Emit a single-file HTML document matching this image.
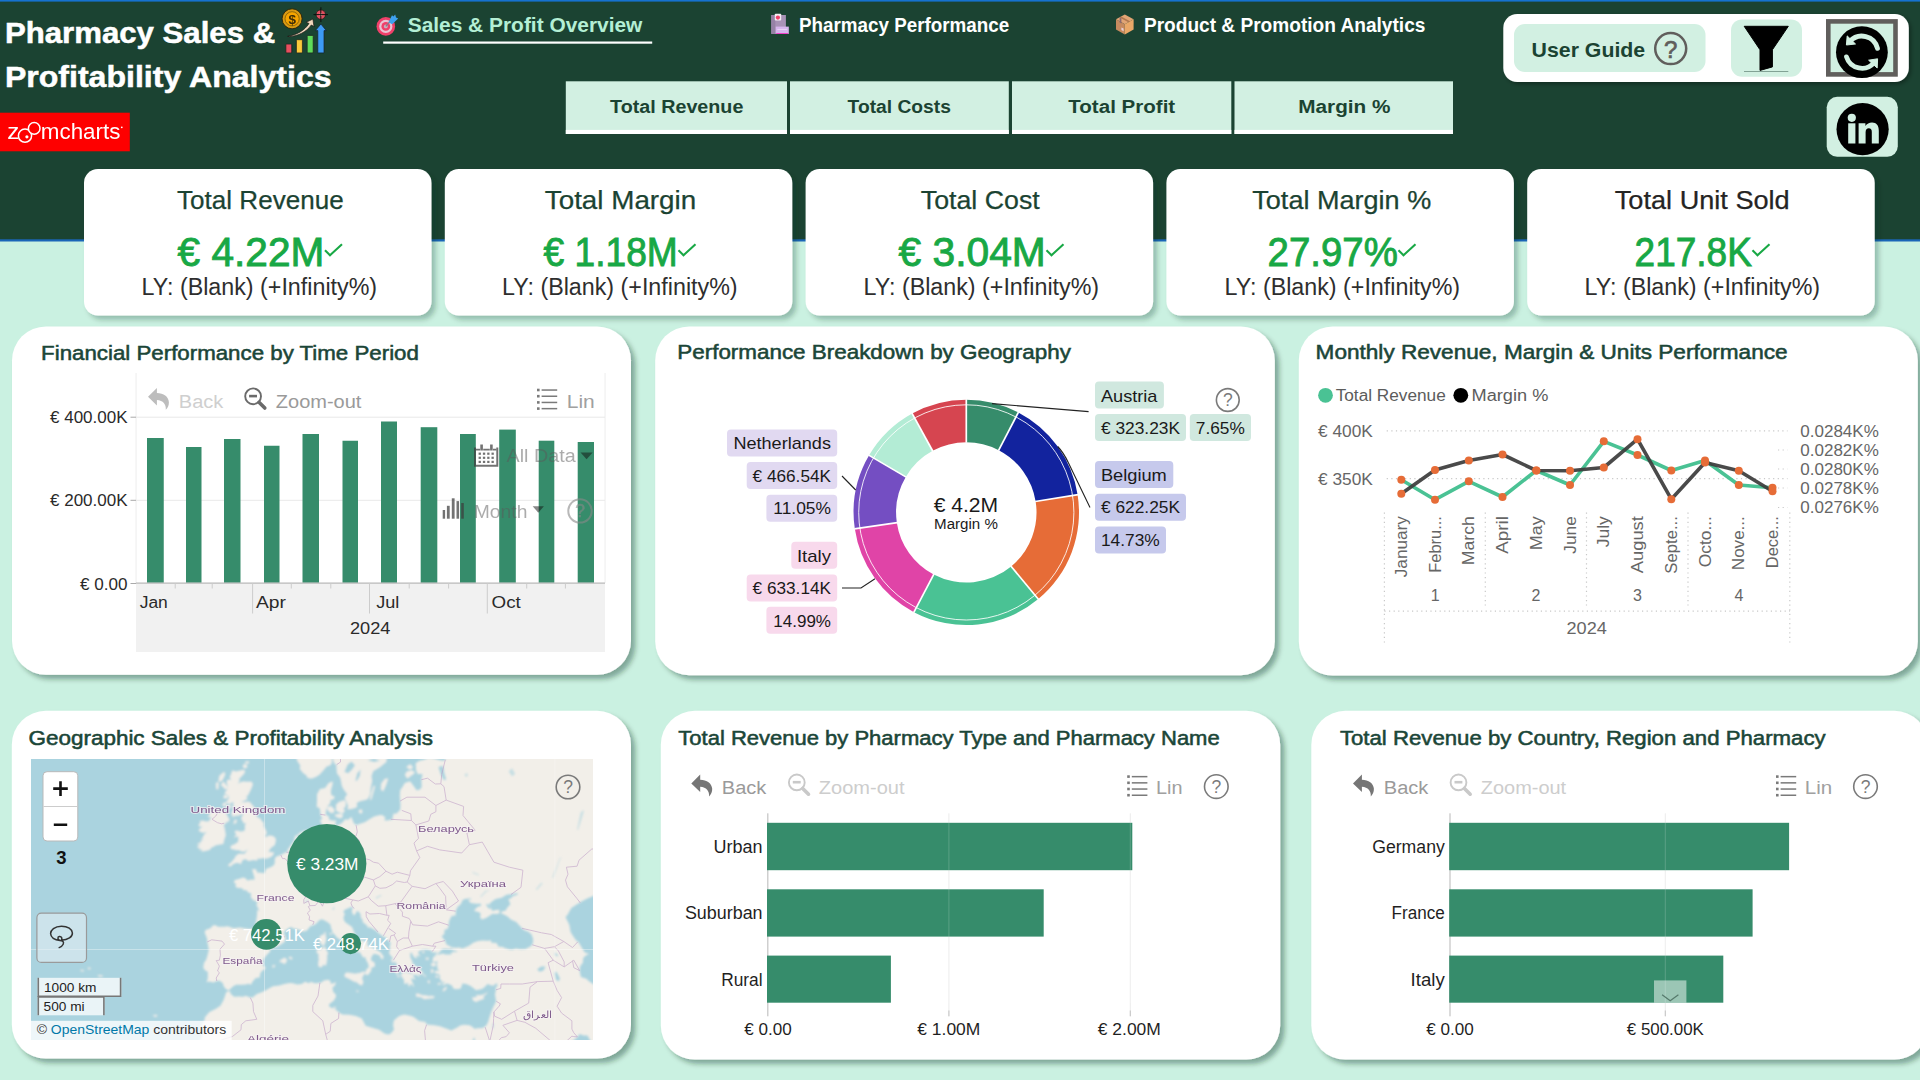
<!DOCTYPE html>
<html lang="en"><head><meta charset="utf-8"><title>Pharmacy Sales &amp; Profitability Analytics</title>
<style>html,body{margin:0;padding:0;background:#caf1e1;overflow:hidden}body{width:1920px;height:1080px;font-family:"Liberation Sans", sans-serif}svg{display:block;font-family:"Liberation Sans", sans-serif}text{white-space:pre}</style></head><body>
<svg width="1920" height="1080" viewBox="0 0 1920 1080">
<defs>
<filter id="sh" x="-5%" y="-5%" width="112%" height="115%"><feDropShadow dx="4.3" dy="4.4" stdDeviation="2.7" flood-color="#0c2a20" flood-opacity="0.37"/></filter>
<filter id="sh2" x="-5%" y="-10%" width="112%" height="130%"><feDropShadow dx="4" dy="4.2" stdDeviation="2.6" flood-color="#0c2a20" flood-opacity="0.27"/></filter>
<filter id="sh3" x="-5%" y="-10%" width="112%" height="130%"><feDropShadow dx="2" dy="2" stdDeviation="2" flood-color="#000" flood-opacity="0.35"/></filter>
<filter id="blurS" x="-10%" y="-10%" width="120%" height="120%"><feGaussianBlur stdDeviation="0.35"/></filter>
<filter id="blurB"><feGaussianBlur stdDeviation="0.4"/></filter>
<filter id="blur"><feGaussianBlur stdDeviation="0.8"/></filter>
<filter id="blurT" x="-5%" y="-30%" width="110%" height="160%"><feGaussianBlur stdDeviation="0.45"/></filter>
<clipPath id="mapclip"><rect x="31" y="759" width="562" height="281"/></clipPath>
</defs>
<rect width="1920" height="1080" fill="#caf1e1"/>
<rect width="1920" height="240.5" fill="#1b4332"/>
<rect y="239.3" width="1920" height="2.2" fill="#1a66b8"/>
<rect width="1920" height="1.6" fill="#1673cf"/>
<text x="4.9" y="42.5" font-size="29.5" textLength="270.3" lengthAdjust="spacingAndGlyphs" font-weight="bold" stroke="#fff" stroke-width="0.5" fill="#fff">Pharmacy Sales &amp;</text>
<text x="4.9" y="87.2" font-size="29.5" textLength="326.7" lengthAdjust="spacingAndGlyphs" font-weight="bold" stroke="#fff" stroke-width="0.5" fill="#fff">Profitability Analytics</text>
<g id="icon-title" filter="url(#blurS)"><circle cx="292.1" cy="18.8" r="10" fill="#d99a12" stroke="#2a2208" stroke-width="0.9"/><circle cx="292.1" cy="18.8" r="7.1" fill="#f6a400" stroke="#7a5a08" stroke-width="0.8"/><text x="292.2" y="23.6" font-size="13.5" font-weight="bold" text-anchor="middle" fill="#3a2c08">$</text><rect x="285.9" y="44.1" width="5.8" height="8.8" rx="0.8" fill="#e8505f" stroke="#20201c" stroke-width="0.7"/><rect x="296.4" y="39.7" width="6" height="13.2" rx="0.8" fill="#fbc93a" stroke="#20201c" stroke-width="0.7"/><rect x="307.2" y="35.4" width="6" height="17.5" rx="0.8" fill="#5fdc5a" stroke="#20201c" stroke-width="0.7"/><path d="M317.8 52.9 L317.8 30.6 L315.4 30.6 L320.9 24 L326.3 30.6 L324 30.6 L324 52.9 Z" fill="#3d9bf5" stroke="#15202c" stroke-width="0.7" stroke-linejoin="round"/><path d="M287.6 36.4 C297 34.8 304.5 30.5 309 23.5 L306.2 22.3 L312.9 19 L314 26.6 L311.3 25 C306.5 32 298 36 289.5 36.6 Z" fill="#f3d9bf" stroke="#1c1a16" stroke-width="0.7" stroke-linejoin="round"/><circle cx="320.8" cy="14.6" r="4.7" fill="#e0505f" stroke="#1c1a16" stroke-width="0.7"/><circle cx="320.8" cy="14.6" r="1.4" fill="#f3d9d0"/><path d="M320.8 7.2 V22 M313.6 14.6 H328" stroke="#101010" stroke-width="1"/></g>
<rect x="0" y="112.7" width="129.8" height="38.6" fill="#fe0000"/>
<g id="zoomcharts" fill="#fff" filter="url(#blurS)"><text x="7.2" y="138.6" font-size="22.5" textLength="12" lengthAdjust="spacingAndGlyphs">z</text><circle cx="25" cy="135.7" r="6.6" fill="none" stroke="#fff" stroke-width="1.5"/><circle cx="34.2" cy="128.4" r="5.8" fill="#fe0000" stroke="#fff" stroke-width="1.5"/><circle cx="26.9" cy="136.8" r="1.6"/><text x="40.8" y="138.6" font-size="22.5" textLength="79.6" lengthAdjust="spacingAndGlyphs">mcharts</text><circle cx="121.8" cy="127.3" r="0.9"/></g>
<g id="icon-nav" filter="url(#blurS)"><circle cx="385.8" cy="26.4" r="9.3" fill="#f0406a"/><circle cx="385.8" cy="26.4" r="6.6" fill="#e9c4d4"/><circle cx="385.8" cy="26.4" r="4.4" fill="#f0406a"/><circle cx="385.8" cy="26.4" r="1.9" fill="#c9b0c0"/><path d="M385.8 26.4 L392.5 18.5" stroke="#8a7a8a" stroke-width="1.3"/><path d="M388.6 22.2 L392 15.2 L393.4 16.6 L395.2 14.4 L396 17.4 L398.2 18.6 L392.2 24.2 Z" fill="#3ea2f0"/><rect x="771.3" y="15" width="14.6" height="18.9" fill="#a893b6"/><rect x="771.3" y="15" width="4" height="18.9" fill="#9682a6"/><rect x="775.7" y="26.6" width="13.1" height="7.3" fill="#d7b6ee"/><rect x="776.2" y="33" width="12" height="1" fill="#f040c8"/><rect x="774.8" y="13.8" width="6.4" height="6.8" rx="0.8" fill="#f4eef4"/><circle cx="777.9" cy="17.6" r="2.1" fill="#f0406a"/><rect x="777.3" y="29" width="9.6" height="1" fill="#e8d2f6"/><path d="M1124.8 14.4 L1133.6 19.2 L1124.8 24.2 L1116 19.2 Z" fill="#e2a574"/><path d="M1116 19.2 L1124.8 24.2 L1124.8 34.6 L1116 29.6 Z" fill="#c68a5e"/><path d="M1133.6 19.2 L1124.8 24.2 L1124.8 34.6 L1133.6 29.6 Z" fill="#eaa868"/><path d="M1121.2 16.4 L1130 21.2 L1128.4 22.2 L1119.6 17.4 Z" fill="#b07850"/><path d="M1119.6 17.4 L1121.4 18.4 L1121.4 23.6 L1119.6 22.6 Z" fill="#8a6a72"/><path d="M1121.4 30 L1123.6 31.2 L1123.6 28.6 L1121.4 27.4 Z" fill="#e8d0d8"/></g>
<text x="407.7" y="32.0" font-size="20" textLength="234.7" lengthAdjust="spacingAndGlyphs" font-weight="bold" fill="#b4efd5">Sales &amp; Profit Overview</text>
<rect x="383.2" y="41.5" width="269" height="2.2" fill="#fff"/>
<text x="799.0" y="31.7" font-size="20" textLength="210.2" lengthAdjust="spacingAndGlyphs" font-weight="bold" fill="#fff">Pharmacy Performance</text>
<text x="1143.9" y="31.7" font-size="20" textLength="281.5" lengthAdjust="spacingAndGlyphs" font-weight="bold" fill="#fff">Product &amp; Promotion Analytics</text>
<rect x="565.8" y="81.3" width="221.2" height="52.7" fill="#d2f0e2"/>
<rect x="565.8" y="129.9" width="221.2" height="4.1" fill="#fff"/>
<text x="610.1" y="113.2" font-size="19.2" textLength="133.3" lengthAdjust="spacingAndGlyphs" font-weight="bold" fill="#1b4332">Total Revenue</text>
<rect x="790" y="81.3" width="218.8" height="52.7" fill="#d2f0e2"/>
<rect x="790" y="129.9" width="218.8" height="4.1" fill="#fff"/>
<text x="847.6" y="113.2" font-size="19.2" textLength="103.3" lengthAdjust="spacingAndGlyphs" font-weight="bold" fill="#1b4332">Total Costs</text>
<rect x="1012" y="81.3" width="219.3" height="52.7" fill="#d2f0e2"/>
<rect x="1012" y="129.9" width="219.3" height="4.1" fill="#fff"/>
<text x="1068.3" y="113.2" font-size="19.2" textLength="106.9" lengthAdjust="spacingAndGlyphs" font-weight="bold" fill="#1b4332">Total Profit</text>
<rect x="1234.5" y="81.3" width="218.5" height="52.7" fill="#d2f0e2"/>
<rect x="1234.5" y="129.9" width="218.5" height="4.1" fill="#fff"/>
<text x="1298.3" y="113.2" font-size="19.2" textLength="92.1" lengthAdjust="spacingAndGlyphs" font-weight="bold" fill="#1b4332">Margin %</text>
<rect x="1503.3" y="14" width="405.5" height="68" rx="14" fill="#fff" filter="url(#sh3)"/>
<rect x="1514" y="24" width="191.5" height="48" rx="11" fill="#d2f0e2"/>
<text x="1531.6" y="56.5" font-size="21" textLength="113.6" lengthAdjust="spacingAndGlyphs" font-weight="bold" fill="#1b4332">User Guide</text>
<circle cx="1670.7" cy="48.6" r="15.5" fill="none" stroke="#605e5c" stroke-width="2.5"/>
<text x="1670.7" y="57.6" font-size="24" text-anchor="middle" stroke="#605e5c" stroke-width="0.7" fill="#605e5c">?</text>
<rect x="1731" y="19.4" width="71" height="57.4" rx="11" fill="#d2f0e2"/>
<path d="M1744.2 26.3 L1788.3 26.3 L1772.4 49.8 L1772.4 66.9 L1760 70.4 L1760 49.8 Z" fill="#000" stroke="#000" stroke-width="1" stroke-linejoin="round"/>
<rect x="1744" y="71" width="44.3" height="0.8" fill="#6f8f82"/>
<rect x="1828.3" y="21.4" width="67.2" height="53" fill="#d2f0e2" stroke="#605e5c" stroke-width="4.6"/>
<g id="icon-refresh"><circle cx="1861.9" cy="52.2" r="25.9" fill="#000"/><path d="M1849.9 41.4 A16.1 16.1 0 0 1 1877.5 48.3" fill="none" stroke="#d2f0e2" stroke-width="4.8" stroke-linecap="round"/><path d="M1874.2 62.5 A16.1 16.1 0 0 1 1846.5 56.9" fill="none" stroke="#d2f0e2" stroke-width="4.8" stroke-linecap="round"/><path d="M1846.4 45.0 L1847.2 35.9 L1855.5 44.0 Z" fill="#d2f0e2" stroke="#d2f0e2" stroke-width="1" stroke-linejoin="round"/><path d="M1877.6 58.8 L1877.2 68.0 L1868.6 60.2 Z" fill="#d2f0e2" stroke="#d2f0e2" stroke-width="1" stroke-linejoin="round"/></g>
<rect x="1826.7" y="96.8" width="71.1" height="60" rx="10.5" fill="#d2f0e2"/>
<g id="icon-linkedin"><circle cx="1862.6" cy="129.2" r="26.1" fill="#000"/><rect x="1848.2" y="123.3" width="7.2" height="20.2" fill="#d2f0e2"/><circle cx="1851.8" cy="117.8" r="4.1" fill="#d2f0e2"/><path d="M1858.6 123.3 H1865.4 V126 C1866.8 123.8 1869.2 122.6 1872 122.6 C1876.6 122.6 1878.8 125.6 1878.8 130.8 V143.5 H1871.8 V132 C1871.8 129.4 1870.8 128.2 1868.8 128.2 C1866.8 128.2 1865.6 129.6 1865.6 132.2 V143.5 H1858.6 Z" fill="#d2f0e2"/></g>
<rect x="84.0" y="169" width="347.5" height="146.5" rx="14" fill="#fff" filter="url(#sh2)"/>
<text x="177.1" y="209.4" font-size="26" textLength="166.6" lengthAdjust="spacingAndGlyphs" stroke="#1b4332" stroke-width="0.25" fill="#1b4332">Total Revenue</text>
<text x="177.6" y="265.9" font-size="40" textLength="146.7" lengthAdjust="spacingAndGlyphs" stroke="#18a845" stroke-width="0.9" fill="#18a845">€ 4.22M</text>
<path d="M325.0 250.3 L330.0 255.2 L342.0 244.2" fill="none" stroke="#18a845" stroke-width="2.1"/>
<text x="141.5" y="294.6" font-size="23.5" textLength="235.6" lengthAdjust="spacingAndGlyphs" fill="#2e2e2e">LY: (Blank) (+Infinity%)</text>
<rect x="444.8" y="169" width="347.5" height="146.5" rx="14" fill="#fff" filter="url(#sh2)"/>
<text x="544.8" y="209.4" font-size="26" textLength="151.4" lengthAdjust="spacingAndGlyphs" stroke="#1b4332" stroke-width="0.25" fill="#1b4332">Total Margin</text>
<text x="543.6" y="265.9" font-size="40" textLength="134.2" lengthAdjust="spacingAndGlyphs" stroke="#18a845" stroke-width="0.9" fill="#18a845">€ 1.18M</text>
<path d="M678.5 250.3 L683.5 255.2 L695.5 244.2" fill="none" stroke="#18a845" stroke-width="2.1"/>
<text x="502.0" y="294.6" font-size="23.5" textLength="235.6" lengthAdjust="spacingAndGlyphs" fill="#2e2e2e">LY: (Blank) (+Infinity%)</text>
<rect x="805.6" y="169" width="347.5" height="146.5" rx="14" fill="#fff" filter="url(#sh2)"/>
<text x="920.8" y="209.4" font-size="26" textLength="118.9" lengthAdjust="spacingAndGlyphs" stroke="#1b4332" stroke-width="0.25" fill="#1b4332">Total Cost</text>
<text x="898.6" y="265.9" font-size="40" textLength="147.2" lengthAdjust="spacingAndGlyphs" stroke="#18a845" stroke-width="0.9" fill="#18a845">€ 3.04M</text>
<path d="M1046.5 250.3 L1051.5 255.2 L1063.5 244.2" fill="none" stroke="#18a845" stroke-width="2.1"/>
<text x="863.5" y="294.6" font-size="23.5" textLength="235.6" lengthAdjust="spacingAndGlyphs" fill="#2e2e2e">LY: (Blank) (+Infinity%)</text>
<rect x="1166.4" y="169" width="347.5" height="146.5" rx="14" fill="#fff" filter="url(#sh2)"/>
<text x="1252.3" y="209.4" font-size="26" textLength="178.9" lengthAdjust="spacingAndGlyphs" stroke="#1b4332" stroke-width="0.25" fill="#1b4332">Total Margin %</text>
<text x="1267.6" y="265.9" font-size="40" textLength="130.2" lengthAdjust="spacingAndGlyphs" stroke="#18a845" stroke-width="0.9" fill="#18a845">27.97%</text>
<path d="M1398.5 250.3 L1403.5 255.2 L1415.5 244.2" fill="none" stroke="#18a845" stroke-width="2.1"/>
<text x="1224.5" y="294.6" font-size="23.5" textLength="235.6" lengthAdjust="spacingAndGlyphs" fill="#2e2e2e">LY: (Blank) (+Infinity%)</text>
<rect x="1527.2" y="169" width="347.5" height="146.5" rx="14" fill="#fff" filter="url(#sh2)"/>
<text x="1614.8" y="209.4" font-size="26" textLength="174.9" lengthAdjust="spacingAndGlyphs" stroke="#252423" stroke-width="0.25" fill="#252423">Total Unit Sold</text>
<text x="1634.6" y="265.9" font-size="40" textLength="117.2" lengthAdjust="spacingAndGlyphs" stroke="#18a845" stroke-width="0.9" fill="#18a845">217.8K</text>
<path d="M1752.5 250.3 L1757.5 255.2 L1769.5 244.2" fill="none" stroke="#18a845" stroke-width="2.1"/>
<text x="1584.5" y="294.6" font-size="23.5" textLength="235.6" lengthAdjust="spacingAndGlyphs" fill="#2e2e2e">LY: (Blank) (+Infinity%)</text>
<rect x="12" y="326.4" width="619" height="348.4" rx="34" fill="#fff" filter="url(#sh)"/>
<rect x="655.2" y="326.4" width="619.6" height="348.8" rx="34" fill="#fff" filter="url(#sh)"/>
<rect x="1298.8" y="326.4" width="619" height="349.2" rx="34" fill="#fff" filter="url(#sh)"/>
<rect x="11.8" y="710.8" width="619.2" height="347.8" rx="34" fill="#fff" filter="url(#sh)"/>
<rect x="660.8" y="710.8" width="619.4" height="348.8" rx="34" fill="#fff" filter="url(#sh)"/>
<rect x="1311.3" y="710.8" width="617" height="348.8" rx="34" fill="#fff" filter="url(#sh)"/>
<text x="41.1" y="359.5" font-size="21" textLength="377.8" lengthAdjust="spacingAndGlyphs" stroke="#1b4638" stroke-width="0.55" fill="#1b4638">Financial Performance by Time Period</text>
<text x="677.3" y="359.4" font-size="21" textLength="393.6" lengthAdjust="spacingAndGlyphs" stroke="#1b4638" stroke-width="0.55" fill="#1b4638">Performance Breakdown by Geography</text>
<text x="1315.6" y="359.4" font-size="21" textLength="472.0" lengthAdjust="spacingAndGlyphs" stroke="#1b4638" stroke-width="0.55" fill="#1b4638">Monthly Revenue, Margin &amp; Units Performance</text>
<text x="28.5" y="745.0" font-size="21" textLength="404.4" lengthAdjust="spacingAndGlyphs" stroke="#1b4638" stroke-width="0.55" fill="#1b4638">Geographic Sales &amp; Profitability Analysis</text>
<text x="678.3" y="744.7" font-size="21" textLength="541.4" lengthAdjust="spacingAndGlyphs" stroke="#1b4638" stroke-width="0.55" fill="#1b4638">Total Revenue by Pharmacy Type and Pharmacy Name</text>
<text x="1339.9" y="744.7" font-size="21" textLength="485.7" lengthAdjust="spacingAndGlyphs" stroke="#1b4638" stroke-width="0.55" fill="#1b4638">Total Revenue by Country, Region and Pharmacy</text>
<g id="p1">
<rect x="136" y="583" width="469" height="69" fill="#f1f1f1"/>
<rect x="135.6" y="373" width="0.9" height="210" fill="#ececec"/><rect x="604.6" y="373" width="0.9" height="210" fill="#ececec"/>
<rect x="136" y="416.7" width="469" height="1" fill="#e9e9e9"/>
<rect x="136" y="499.8" width="469" height="1" fill="#e9e9e9"/>
<rect x="130.5" y="416.7" width="5.5" height="1" fill="#aaa"/>
<rect x="130.5" y="499.8" width="5.5" height="1" fill="#aaa"/>
<rect x="130.5" y="583" width="5.5" height="1" fill="#aaa"/>
<rect x="147" y="438" width="16.75" height="145.00" fill="#368c6b"/>
<rect x="186" y="447" width="15.50" height="136.00" fill="#368c6b"/>
<rect x="224" y="439" width="16.50" height="144.00" fill="#368c6b"/>
<rect x="264" y="445.75" width="15.50" height="137.25" fill="#368c6b"/>
<rect x="302.5" y="434" width="16.50" height="149.00" fill="#368c6b"/>
<rect x="342.5" y="440.75" width="15.50" height="142.25" fill="#368c6b"/>
<rect x="381" y="421.5" width="16.00" height="161.50" fill="#368c6b"/>
<rect x="420.7" y="427.2" width="16.60" height="155.80" fill="#368c6b"/>
<rect x="460" y="434" width="15.80" height="149.00" fill="#368c6b"/>
<rect x="499.2" y="429.6" width="16.60" height="153.40" fill="#368c6b"/>
<rect x="538.7" y="440.7" width="15.60" height="142.30" fill="#368c6b"/>
<rect x="577.7" y="442" width="16.30" height="141.00" fill="#368c6b"/>
<rect x="136" y="582.4" width="469" height="1.5" fill="#c4c4c4"/>
<rect x="174.7" y="583.5" width="1" height="5" fill="#ccc"/>
<rect x="211.7" y="583.5" width="1" height="5" fill="#ccc"/>
<rect x="290.8" y="583.5" width="1" height="5" fill="#ccc"/>
<rect x="330.3" y="583.5" width="1" height="5" fill="#ccc"/>
<rect x="408.7" y="583.5" width="1" height="5" fill="#ccc"/>
<rect x="448.1" y="583.5" width="1" height="5" fill="#ccc"/>
<rect x="526.2" y="583.5" width="1" height="5" fill="#ccc"/>
<rect x="564.9" y="583.5" width="1" height="5" fill="#ccc"/>
<rect x="252.1" y="583.5" width="1" height="30" fill="#ccc"/>
<rect x="369.0" y="583.5" width="1" height="30" fill="#ccc"/>
<rect x="486.8" y="583.5" width="1" height="30" fill="#ccc"/>
<text x="50.0" y="422.7" font-size="16" textLength="77.5" lengthAdjust="spacingAndGlyphs" fill="#2a2a2a">€ 400.00K</text>
<text x="50.0" y="505.8" font-size="16" textLength="77.5" lengthAdjust="spacingAndGlyphs" fill="#2a2a2a">€ 200.00K</text>
<text x="80.0" y="589.7" font-size="16" textLength="47.5" lengthAdjust="spacingAndGlyphs" fill="#2a2a2a">€ 0.00</text>
<text x="139.7" y="607.8" font-size="16" textLength="28.1" lengthAdjust="spacingAndGlyphs" fill="#2a2a2a">Jan</text>
<text x="255.9" y="607.8" font-size="16" textLength="29.9" lengthAdjust="spacingAndGlyphs" fill="#2a2a2a">Apr</text>
<text x="376.2" y="607.8" font-size="16" textLength="23.1" lengthAdjust="spacingAndGlyphs" fill="#2a2a2a">Jul</text>
<text x="491.6" y="607.8" font-size="16" textLength="29.2" lengthAdjust="spacingAndGlyphs" fill="#2a2a2a">Oct</text>
<text x="350.0" y="633.9" font-size="16" textLength="40.4" lengthAdjust="spacingAndGlyphs" fill="#2a2a2a">2024</text>
<g transform="translate(148,388.2)" fill="#bdbdbd"><path d="M0 8.6 L8.9 -0.2 L8.9 4.9 C15.5 5 20.6 8.6 20.9 14 C21 17 19.8 19.6 17.8 21.6 C18.2 16.4 15.2 12.2 8.9 11.9 L8.9 17.2 Z"/></g>
<text x="178.8" y="407.5" font-size="18" textLength="44.5" lengthAdjust="spacingAndGlyphs" fill="#cfcfcf">Back</text>
<g transform="translate(243.8,387.5)" fill="none" stroke="#6a6a6a"><circle cx="9.3" cy="8.8" r="7.9" stroke-width="1.9"/><path d="M5.3 8.6 L13.2 8.6" stroke-width="2.6"/><path d="M15.2 14.8 L21 20.6" stroke-width="3.6" stroke-linecap="round" stroke="#6a6a6a"/></g>
<text x="275.8" y="407.5" font-size="18" textLength="85.6" lengthAdjust="spacingAndGlyphs" fill="#9a9a9a">Zoom-out</text>
<g transform="translate(537,388.4)" fill="#7a7a7a"><rect x="0" y="0.3" width="2.6" height="2.6"/><rect x="4.6" y="0.9" width="15.6" height="1.5"/><rect x="0" y="6.5" width="2.6" height="2.6"/><rect x="4.6" y="7.1" width="15.6" height="1.5"/><rect x="0" y="12.7" width="2.6" height="2.6"/><rect x="4.6" y="13.3" width="15.6" height="1.5"/><rect x="0" y="18.9" width="2.6" height="2.6"/><rect x="4.6" y="19.5" width="15.6" height="1.5"/></g>
<text x="566.8" y="408.0" font-size="18" textLength="28.0" lengthAdjust="spacingAndGlyphs" fill="#a0a0a0">Lin</text>
<g opacity="0.72">
<g fill="none" stroke="#3c3c3c"><path d="M475 447.6 V465.8 H497.3 V447.6" stroke-width="2"/><path d="M481.6 444.6 V450.4 M491.4 444.6 V450.4" stroke-width="2.6"/><path d="M476 449.6 H480 M483.2 449.6 H489.8 M493 449.6 H496.5" stroke-width="1.6"/></g>
<g fill="#3c3c3c"><rect x="478.6" y="452.6" width="2.3" height="2.2"/><rect x="482.9" y="452.6" width="2.3" height="2.2"/><rect x="487.2" y="452.6" width="2.3" height="2.2"/><rect x="491.5" y="452.6" width="2.3" height="2.2"/><rect x="478.6" y="456.7" width="2.3" height="2.2"/><rect x="482.9" y="456.7" width="2.3" height="2.2"/><rect x="487.2" y="456.7" width="2.3" height="2.2"/><rect x="491.5" y="456.7" width="2.3" height="2.2"/><rect x="478.6" y="460.8" width="2.3" height="2.2"/><rect x="482.9" y="460.8" width="2.3" height="2.2"/><rect x="487.2" y="460.8" width="2.3" height="2.2"/><rect x="491.5" y="460.8" width="2.3" height="2.2"/></g>
<g fill="#3c3c3c"><rect x="442.7" y="510" width="2.4" height="8.7"/><rect x="446.9" y="505.8" width="2.8" height="12.9"/><rect x="451.8" y="498.3" width="2.8" height="20.4"/><rect x="456.5" y="501.1" width="2.6" height="17.6"/><rect x="461.2" y="503" width="2.6" height="15.7"/></g>
</g>
<g opacity="0.5">
<text x="506.6" y="462.2" font-size="18" textLength="69.0" lengthAdjust="spacingAndGlyphs" fill="#5a5a5a">All Data</text>
<path d="M580.5 452.4 L592.7 452.4 L586.6 459.2 Z" fill="#111"/>
<text x="473.8" y="518.0" font-size="18" textLength="53.6" lengthAdjust="spacingAndGlyphs" fill="#5a5a5a">Month</text>
<path d="M532.7 506.2 L543.9 506.2 L538.3 512.8 Z" fill="#111"/>
</g>
<g opacity="0.6">
<circle cx="580" cy="510.9" r="11.7" fill="none" stroke="#8a8a8a" stroke-width="2"/>
<text x="580.0" y="517.2" font-size="17.5" text-anchor="middle" stroke="#8a8a8a" stroke-width="0.5" fill="#8a8a8a">?</text>
</g>
</g>
<g id="p2">
<path d="M966.30 399.70 A112.7 112.7 0 0 1 1018.34 412.43 L998.71 450.13 A70.2 70.2 0 0 0 966.30 442.20 Z" fill="#368c6b"/>
<path d="M1018.34 412.43 A112.7 112.7 0 0 1 1077.61 494.77 L1035.64 501.42 A70.2 70.2 0 0 0 998.71 450.13 Z" fill="#12239e"/>
<path d="M1077.61 494.77 A112.7 112.7 0 0 1 1038.29 599.11 L1011.14 566.41 A70.2 70.2 0 0 0 1035.64 501.42 Z" fill="#e66c37"/>
<path d="M1038.29 599.11 A112.7 112.7 0 0 1 913.91 612.18 L933.67 574.55 A70.2 70.2 0 0 0 1011.14 566.41 Z" fill="#4ac294"/>
<path d="M913.91 612.18 A112.7 112.7 0 0 1 854.81 528.86 L896.85 522.66 A70.2 70.2 0 0 0 933.67 574.55 Z" fill="#e044a7"/>
<path d="M854.81 528.86 A112.7 112.7 0 0 1 869.09 455.37 L905.75 476.88 A70.2 70.2 0 0 0 896.85 522.66 Z" fill="#744ec2"/>
<path d="M869.09 455.37 A112.7 112.7 0 0 1 912.18 413.55 L932.59 450.82 A70.2 70.2 0 0 0 905.75 476.88 Z" fill="#b3ecd5"/>
<path d="M912.18 413.55 A112.7 112.7 0 0 1 966.30 399.70 L966.30 442.20 A70.2 70.2 0 0 0 932.59 450.82 Z" fill="#d64550"/>
<circle cx="966.3" cy="512.4" r="107.6" fill="none" stroke="#fff" stroke-width="1" opacity="0.85"/>
<path d="M966.30 442.70 L966.30 399.20" stroke="#fff" stroke-width="1.7"/>
<path d="M998.48 450.58 L1018.57 411.99" stroke="#fff" stroke-width="1.7"/>
<path d="M1035.14 501.50 L1078.11 494.69" stroke="#fff" stroke-width="1.7"/>
<path d="M1010.82 566.03 L1038.61 599.50" stroke="#fff" stroke-width="1.7"/>
<path d="M933.90 574.11 L913.68 612.63" stroke="#fff" stroke-width="1.7"/>
<path d="M897.35 522.58 L854.31 528.94" stroke="#fff" stroke-width="1.7"/>
<path d="M906.18 477.13 L868.66 455.12" stroke="#fff" stroke-width="1.7"/>
<path d="M932.83 451.26 L911.94 413.11" stroke="#fff" stroke-width="1.7"/>
<text x="933.7" y="512.4" font-size="20" textLength="64.5" lengthAdjust="spacingAndGlyphs" fill="#1a1a1a">€ 4.2M</text>
<text x="934.1" y="529.3" font-size="14" textLength="63.8" lengthAdjust="spacingAndGlyphs" fill="#1a1a1a">Margin %</text>
<g fill="none" stroke="#222" stroke-width="1.1"><path d="M992 403.6 L1088.6 411.6"/><path d="M1057.7 446.5 Q1063.5 452.5 1068.5 463 L1090 507.5"/><path d="M842 476 L855.7 490"/><path d="M842 588 L861 588 L875 578.7"/></g>
<rect x="727" y="429.6" width="110.2" height="27" rx="4" fill="#e1d9f1"/>
<text x="733.4" y="449.0" font-size="17" textLength="97.6" lengthAdjust="spacingAndGlyphs" fill="#1a1a1a">Netherlands</text>
<rect x="746.7" y="462" width="90.5" height="27" rx="4" fill="#e1d9f1"/>
<text x="752.6" y="482.0" font-size="17" textLength="78.4" lengthAdjust="spacingAndGlyphs" fill="#1a1a1a">€ 466.54K</text>
<rect x="766.4" y="494.7" width="70.8" height="27" rx="4" fill="#e1d9f1"/>
<text x="773.3" y="514.2" font-size="17" textLength="57.7" lengthAdjust="spacingAndGlyphs" fill="#1a1a1a">11.05%</text>
<rect x="791.3" y="541.7" width="45.9" height="27" rx="4" fill="#f8d9ec"/>
<text x="796.9" y="562.0" font-size="17" textLength="34.1" lengthAdjust="spacingAndGlyphs" fill="#1a1a1a">Italy</text>
<rect x="746.7" y="574.4" width="90.5" height="27" rx="4" fill="#f8d9ec"/>
<text x="752.6" y="593.7" font-size="17" textLength="78.4" lengthAdjust="spacingAndGlyphs" fill="#1a1a1a">€ 633.14K</text>
<rect x="766.4" y="606.8" width="70.8" height="27" rx="4" fill="#f8d9ec"/>
<text x="773.3" y="626.7" font-size="17" textLength="57.7" lengthAdjust="spacingAndGlyphs" fill="#1a1a1a">14.99%</text>
<rect x="1095" y="381.6" width="68.9" height="27" rx="4" fill="#d0e8df"/>
<text x="1100.9" y="401.5" font-size="17" textLength="56.6" lengthAdjust="spacingAndGlyphs" fill="#1a1a1a">Austria</text>
<rect x="1095" y="414.1" width="91.0" height="27" rx="4" fill="#d0e8df"/>
<text x="1100.9" y="434.0" font-size="17" textLength="79.2" lengthAdjust="spacingAndGlyphs" fill="#1a1a1a">€ 323.23K</text>
<rect x="1189.8" y="414.1" width="61.2" height="27" rx="4" fill="#d0e8df"/>
<text x="1195.8" y="434.0" font-size="17" textLength="49.0" lengthAdjust="spacingAndGlyphs" fill="#1a1a1a">7.65%</text>
<rect x="1095" y="460.9" width="78.3" height="27" rx="4" fill="#c6c9ec"/>
<text x="1100.9" y="481.0" font-size="17" textLength="65.9" lengthAdjust="spacingAndGlyphs" fill="#1a1a1a">Belgium</text>
<rect x="1095" y="493.7" width="91.0" height="27" rx="4" fill="#c6c9ec"/>
<text x="1100.9" y="513.0" font-size="17" textLength="79.2" lengthAdjust="spacingAndGlyphs" fill="#1a1a1a">€ 622.25K</text>
<rect x="1095" y="526.4" width="71.0" height="27" rx="4" fill="#c6c9ec"/>
<text x="1100.9" y="546.0" font-size="17" textLength="58.9" lengthAdjust="spacingAndGlyphs" fill="#1a1a1a">14.73%</text>
<circle cx="1227.8" cy="400" r="11.4" fill="none" stroke="#7a7a7a" stroke-width="1.6"/>
<text x="1227.8" y="406.2" font-size="17.5" text-anchor="middle" fill="#7a7a7a">?</text>
</g>
<g id="p3">
<circle cx="1325.5" cy="395.3" r="7.4" fill="#4ac294"/>
<text x="1335.7" y="401.2" font-size="16" textLength="110.1" lengthAdjust="spacingAndGlyphs" fill="#5c5c5c">Total Revenue</text>
<circle cx="1460.8" cy="395.3" r="7.4" fill="#000"/>
<text x="1471.5" y="401.2" font-size="16" textLength="76.8" lengthAdjust="spacingAndGlyphs" fill="#5c5c5c">Margin %</text>
<text x="1318.0" y="436.7" font-size="16" textLength="54.8" lengthAdjust="spacingAndGlyphs" fill="#666">€ 400K</text>
<text x="1318.0" y="484.7" font-size="16" textLength="54.8" lengthAdjust="spacingAndGlyphs" fill="#666">€ 350K</text>
<path d="M1386.7 430.8 H1787.5 M1386.7 478.7 H1787.5" stroke="#c8c8c8" stroke-width="1.2" stroke-dasharray="1.2 3.4" fill="none"/>
<path d="M1778 450 H1787.5 M1778 469 H1787.5 M1778 488 H1787.5 M1778 507.5 H1787.5" stroke="#c8c8c8" stroke-width="1.2" stroke-dasharray="1.2 3.4" fill="none"/>
<text x="1800.3" y="436.7" font-size="16" textLength="78.5" lengthAdjust="spacingAndGlyphs" fill="#666">0.0284K%</text>
<text x="1800.3" y="455.6" font-size="16" textLength="78.5" lengthAdjust="spacingAndGlyphs" fill="#666">0.0282K%</text>
<text x="1800.3" y="474.7" font-size="16" textLength="78.5" lengthAdjust="spacingAndGlyphs" fill="#666">0.0280K%</text>
<text x="1800.3" y="493.7" font-size="16" textLength="78.5" lengthAdjust="spacingAndGlyphs" fill="#666">0.0278K%</text>
<text x="1800.3" y="512.6" font-size="16" textLength="78.5" lengthAdjust="spacingAndGlyphs" fill="#666">0.0276K%</text>
<path d="M1401.3 479.7 L1435.0 499.7 L1468.8 481.3 L1502.5 497.0 L1536.3 470.5 L1570.0 485.0 L1603.8 441.3 L1637.5 455.0 L1671.3 470.5 L1705.0 460.5 L1738.8 485.0 L1772.5 487.8" fill="none" stroke="#4ac294" stroke-width="3.6" stroke-linejoin="round"/>
<path d="M1401.3 493.7 L1435.0 470.0 L1468.8 460.5 L1502.5 454.5 L1536.3 470.5 L1570.0 470.8 L1603.8 467.5 L1637.5 439.2 L1671.3 499.2 L1705.0 462.5 L1738.8 470.8 L1772.5 491.3" fill="none" stroke="#3c3c3c" stroke-opacity="0.93" stroke-width="3.6" stroke-linejoin="round"/>
<circle cx="1401.3" cy="479.7" r="4" fill="#e66c37"/>
<circle cx="1435.0" cy="499.7" r="4" fill="#e66c37"/>
<circle cx="1468.8" cy="481.3" r="4" fill="#e66c37"/>
<circle cx="1502.5" cy="497.0" r="4" fill="#e66c37"/>
<circle cx="1536.3" cy="470.5" r="4" fill="#e66c37"/>
<circle cx="1570.0" cy="485.0" r="4" fill="#e66c37"/>
<circle cx="1603.8" cy="441.3" r="4" fill="#e66c37"/>
<circle cx="1637.5" cy="455.0" r="4" fill="#e66c37"/>
<circle cx="1671.3" cy="470.5" r="4" fill="#e66c37"/>
<circle cx="1705.0" cy="460.5" r="4" fill="#e66c37"/>
<circle cx="1738.8" cy="485.0" r="4" fill="#e66c37"/>
<circle cx="1772.5" cy="487.8" r="4" fill="#e66c37"/>
<circle cx="1401.3" cy="493.7" r="4" fill="#e66c37"/>
<circle cx="1435.0" cy="470.0" r="4" fill="#e66c37"/>
<circle cx="1468.8" cy="460.5" r="4" fill="#e66c37"/>
<circle cx="1502.5" cy="454.5" r="4" fill="#e66c37"/>
<circle cx="1536.3" cy="470.5" r="4" fill="#e66c37"/>
<circle cx="1570.0" cy="470.8" r="4" fill="#e66c37"/>
<circle cx="1603.8" cy="467.5" r="4" fill="#e66c37"/>
<circle cx="1637.5" cy="439.2" r="4" fill="#e66c37"/>
<circle cx="1671.3" cy="499.2" r="4" fill="#e66c37"/>
<circle cx="1705.0" cy="462.5" r="4" fill="#e66c37"/>
<circle cx="1738.8" cy="470.8" r="4" fill="#e66c37"/>
<circle cx="1772.5" cy="491.3" r="4" fill="#e66c37"/>
<path d="M1384.4 512.6 V644.4 M1789.8 512.6 V644.4 M1485.3 512.6 V605.4 M1586.5 512.6 V605.4 M1688 512.6 V605.4 M1384.4 611.1 H1790" stroke="#c8c8c8" stroke-width="1.2" stroke-dasharray="1.2 3.4" fill="none"/>
<text transform="translate(1406.9,516.2) rotate(-90)" font-size="16" text-anchor="end" textLength="61" lengthAdjust="spacingAndGlyphs" fill="#666">January</text>
<text transform="translate(1440.6,516.2) rotate(-90)" font-size="16" text-anchor="end" textLength="56.5" lengthAdjust="spacingAndGlyphs" fill="#666">Febru...</text>
<text transform="translate(1474.4,516.2) rotate(-90)" font-size="16" text-anchor="end" textLength="49" lengthAdjust="spacingAndGlyphs" fill="#666">March</text>
<text transform="translate(1508.1,516.2) rotate(-90)" font-size="16" text-anchor="end" textLength="37.5" lengthAdjust="spacingAndGlyphs" fill="#666">April</text>
<text transform="translate(1541.9,516.2) rotate(-90)" font-size="16" text-anchor="end" textLength="34" lengthAdjust="spacingAndGlyphs" fill="#666">May</text>
<text transform="translate(1575.6,516.2) rotate(-90)" font-size="16" text-anchor="end" textLength="37.5" lengthAdjust="spacingAndGlyphs" fill="#666">June</text>
<text transform="translate(1609.4,516.2) rotate(-90)" font-size="16" text-anchor="end" textLength="31" lengthAdjust="spacingAndGlyphs" fill="#666">July</text>
<text transform="translate(1643.1,516.2) rotate(-90)" font-size="16" text-anchor="end" textLength="57" lengthAdjust="spacingAndGlyphs" fill="#666">August</text>
<text transform="translate(1676.9,516.2) rotate(-90)" font-size="16" text-anchor="end" textLength="57.5" lengthAdjust="spacingAndGlyphs" fill="#666">Septe...</text>
<text transform="translate(1710.6,516.2) rotate(-90)" font-size="16" text-anchor="end" textLength="51" lengthAdjust="spacingAndGlyphs" fill="#666">Octo...</text>
<text transform="translate(1744.3,516.2) rotate(-90)" font-size="16" text-anchor="end" textLength="54" lengthAdjust="spacingAndGlyphs" fill="#666">Nove...</text>
<text transform="translate(1778.1,516.2) rotate(-90)" font-size="16" text-anchor="end" textLength="52" lengthAdjust="spacingAndGlyphs" fill="#666">Dece...</text>
<text x="1435.3" y="600.8" font-size="16" text-anchor="middle" fill="#666">1</text>
<text x="1536.0" y="600.8" font-size="16" text-anchor="middle" fill="#666">2</text>
<text x="1637.4" y="600.8" font-size="16" text-anchor="middle" fill="#666">3</text>
<text x="1739.0" y="600.8" font-size="16" text-anchor="middle" fill="#666">4</text>
<text x="1566.5" y="633.6" font-size="16" textLength="40.3" lengthAdjust="spacingAndGlyphs" fill="#666">2024</text>
</g>
<g id="p4">
<g clip-path="url(#mapclip)">
<rect x="31" y="759" width="562.5" height="281.5" fill="#f2efe9"/>
<g filter="url(#blur)">
<path d="M26.1 1044.0 L199.4 1044.0 L199.4 1041.0 L202.0 1035.8 L202.3 1033.2 L201.0 1029.1 L201.5 1025.3 L204.6 1020.0 L204.9 1017.3 L209.4 1012.0 L215.5 1009.1 L220.4 1005.8 L223.6 999.9 L225.2 995.2 L226.3 992.0 L228.4 991.2 L228.4 990.3 L225.5 988.8 L223.6 986.0 L222.9 983.2 L219.7 980.8 L216.8 981.0 L213.6 982.4 L209.1 981.6 L206.5 982.3 L207.8 978.4 L207.8 971.8 L205.2 970.6 L203.3 968.1 L203.9 963.1 L206.2 959.8 L207.3 956.0 L208.8 950.1 L208.4 947.5 L207.3 941.9 L207.1 938.9 L205.9 935.4 L204.6 932.6 L205.5 930.1 L210.4 928.3 L212.6 925.7 L214.9 925.0 L218.1 926.8 L223.9 926.7 L227.8 926.3 L233.6 928.2 L240.0 927.6 L245.2 928.5 L249.7 929.1 L253.2 928.5 L254.8 927.0 L256.1 921.2 L256.8 917.1 L257.4 909.4 L259.7 911.2 L257.7 907.5 L256.4 904.8 L257.4 902.0 L252.9 900.1 L250.6 896.8 L251.3 893.5 L248.1 892.6 L246.5 890.2 L243.9 890.2 L241.9 888.3 L236.8 887.8 L234.9 885.4 L236.8 884.4 L234.9 883.2 L233.7 882.2 L234.9 880.1 L239.0 878.9 L242.6 877.6 L245.2 877.9 L247.4 880.5 L251.6 879.4 L254.5 879.8 L254.3 877.1 L252.9 872.2 L252.1 869.0 L256.1 869.2 L257.1 872.4 L261.3 872.7 L263.9 873.2 L265.5 871.7 L265.1 870.7 L266.1 869.0 L271.5 866.8 L274.2 864.7 L274.8 862.2 L274.8 858.6 L276.4 856.4 L280.9 855.1 L285.1 852.5 L287.7 852.0 L287.4 849.9 L290.3 845.9 L293.8 841.0 L295.1 835.7 L297.4 835.1 L299.3 833.0 L304.5 830.6 L309.0 830.6 L309.9 831.9 L311.5 827.6 L316.1 827.4 L317.7 830.3 L319.3 829.2 L319.9 825.6 L322.5 825.6 L321.5 823.2 L319.9 820.8 L322.2 818.8 L320.6 814.9 L320.2 811.5 L319.6 808.1 L316.7 806.9 L317.0 800.7 L317.0 794.3 L319.9 789.0 L325.1 788.1 L328.6 783.0 L332.8 781.3 L332.5 784.8 L330.9 790.4 L331.2 794.9 L334.7 796.6 L333.8 799.3 L330.6 800.1 L330.2 803.6 L328.0 805.8 L326.7 808.1 L326.0 811.5 L325.7 814.9 L328.9 816.3 L328.9 819.3 L330.2 820.1 L333.8 820.8 L336.0 819.9 L335.4 824.3 L334.4 824.9 L338.3 825.2 L342.5 822.4 L345.1 819.3 L348.3 819.7 L351.2 816.8 L352.8 820.5 L353.8 823.2 L356.3 825.1 L359.9 823.8 L364.7 822.3 L370.2 818.8 L374.1 816.6 L379.9 815.1 L382.8 815.2 L385.7 817.7 L384.0 819.9 L386.6 820.5 L389.5 820.1 L392.7 819.3 L392.7 817.1 L393.4 813.8 L396.6 813.5 L400.2 809.8 L400.5 805.0 L400.2 800.7 L399.8 796.0 L400.2 790.2 L403.4 785.4 L404.7 783.0 L410.1 781.2 L413.7 786.0 L416.6 790.2 L419.8 789.6 L421.7 787.2 L421.4 779.7 L422.4 773.9 L417.6 773.9 L415.9 769.6 L415.9 766.5 L415.6 763.3 L419.5 760.8 L424.0 759.8 L428.8 757.6 L432.1 758.0 L435.9 758.9 L439.8 760.2 L443.7 760.8 L445.3 759.8 L446.2 756.3 L450.7 754.4 L456.5 753.8 L459.1 754.4 L459.1 750.5 L26.1 750.5 Z" fill="#aad3df"/>
<path d="M230.0 989.2 L232.9 986.4 L236.1 984.7 L241.9 984.7 L245.8 984.4 L248.7 983.8 L251.0 984.7 L252.6 981.6 L255.8 978.0 L259.7 977.4 L260.0 974.3 L261.4 971.5 L264.2 969.4 L266.0 968.1 L263.5 966.1 L262.4 962.3 L264.2 958.0 L267.4 954.3 L270.1 951.6 L270.3 949.2 L272.6 948.4 L278.5 946.1 L284.5 941.9 L285.8 938.0 L284.2 934.5 L284.2 931.4 L287.1 929.2 L290.9 927.0 L294.1 928.8 L297.0 929.0 L299.0 929.7 L302.8 931.4 L306.1 931.0 L307.7 929.7 L309.6 927.0 L311.5 925.7 L314.8 924.7 L317.3 922.5 L319.3 920.3 L322.0 919.2 L325.1 920.8 L328.0 922.5 L330.6 924.8 L330.9 927.5 L332.5 931.9 L332.2 932.5 L335.4 935.2 L336.4 937.1 L340.2 939.8 L343.3 942.8 L345.8 945.4 L348.6 947.3 L352.1 947.3 L355.0 950.7 L356.7 950.8 L357.0 952.6 L359.7 952.0 L361.2 954.6 L363.1 957.5 L365.4 957.3 L366.3 960.6 L367.9 963.1 L368.9 967.3 L366.6 969.0 L365.2 972.7 L365.5 974.7 L368.0 974.9 L371.2 971.0 L371.5 967.7 L375.0 966.5 L374.7 962.7 L370.8 960.1 L371.5 956.9 L373.4 953.9 L375.7 953.9 L379.9 955.6 L380.5 957.9 L382.9 959.4 L383.7 956.4 L380.5 952.2 L376.6 950.1 L373.2 948.1 L367.6 945.4 L367.1 943.8 L368.8 941.5 L365.0 941.2 L361.2 940.6 L359.2 938.9 L356.1 936.5 L354.1 931.9 L352.1 927.0 L349.6 925.2 L345.5 922.4 L343.6 919.4 L343.8 915.8 L345.1 914.4 L343.4 912.1 L344.4 910.0 L348.9 908.0 L351.8 906.8 L353.2 908.0 L351.8 909.4 L352.1 912.6 L353.8 915.5 L355.4 914.1 L356.7 911.2 L358.3 911.2 L360.5 914.0 L360.8 917.6 L362.8 920.3 L362.5 922.1 L367.0 925.4 L367.6 927.5 L370.5 927.5 L374.1 929.4 L377.0 931.4 L378.2 932.8 L381.1 935.0 L384.0 937.0 L385.0 937.0 L387.6 939.8 L389.5 941.9 L390.8 942.8 L389.8 946.5 L390.2 949.7 L388.9 952.2 L390.0 954.8 L393.1 958.5 L393.4 960.2 L395.1 961.9 L398.2 966.3 L400.5 971.0 L402.7 971.6 L405.0 971.4 L408.9 971.4 L412.1 973.5 L412.4 974.7 L408.9 972.7 L404.7 972.0 L402.1 972.7 L400.7 975.1 L401.8 976.9 L404.0 980.0 L404.3 983.9 L406.0 984.0 L407.2 982.3 L408.7 986.0 L409.4 987.2 L410.0 984.4 L411.4 984.0 L413.4 986.8 L414.0 986.8 L413.0 983.6 L411.4 980.0 L411.4 977.8 L413.7 979.2 L415.9 979.0 L414.0 977.4 L413.0 974.9 L416.6 974.8 L419.4 977.1 L419.5 973.1 L416.9 971.0 L414.7 969.2 L410.8 967.7 L410.1 967.0 L412.4 966.1 L414.0 965.1 L415.0 964.6 L412.4 963.6 L412.4 961.5 L410.5 957.7 L410.1 953.5 L412.1 952.4 L412.4 954.8 L415.0 958.0 L417.4 958.3 L415.6 955.6 L417.6 956.0 L419.0 958.1 L418.2 954.8 L421.4 956.6 L419.2 954.2 L417.6 952.0 L419.2 951.4 L421.7 949.8 L426.3 949.5 L431.2 950.5 L432.4 952.6 L437.2 952.2 L433.3 957.3 L433.0 958.1 L432.5 962.1 L436.6 961.5 L438.2 961.5 L436.6 963.6 L437.5 966.5 L437.2 968.5 L439.3 970.8 L436.2 970.8 L434.0 971.8 L435.9 973.5 L438.5 973.9 L440.1 975.4 L439.8 979.6 L442.4 980.8 L440.4 982.3 L445.6 982.2 L440.9 985.0 L444.9 984.8 L446.9 983.6 L450.4 984.8 L452.0 985.5 L453.3 988.4 L455.9 989.2 L460.4 988.7 L461.7 986.0 L462.3 983.4 L466.2 984.0 L470.7 986.1 L476.1 990.2 L481.0 989.2 L483.3 988.2 L487.7 984.0 L491.3 985.6 L493.9 985.6 L496.5 983.1 L497.6 985.6 L495.5 988.0 L496.0 989.8 L495.0 994.2 L495.7 999.1 L496.3 1001.3 L495.4 1002.7 L493.3 1006.9 L491.3 1011.7 L490.1 1015.3 L489.1 1018.5 L488.3 1021.5 L486.8 1024.6 L485.2 1026.6 L482.3 1028.1 L477.8 1028.3 L474.3 1028.7 L472.7 1027.1 L469.6 1025.2 L464.0 1024.7 L460.1 1025.5 L457.2 1027.6 L451.4 1030.4 L446.9 1028.7 L440.0 1026.3 L434.6 1025.3 L426.6 1024.6 L425.6 1021.9 L419.0 1020.9 L413.4 1016.7 L410.3 1015.7 L404.3 1014.4 L399.2 1016.0 L393.8 1020.6 L393.1 1025.3 L394.0 1029.8 L390.8 1033.4 L388.2 1034.6 L384.4 1033.4 L379.2 1029.8 L371.5 1027.6 L365.7 1025.7 L363.4 1021.5 L361.8 1018.5 L356.0 1016.0 L349.4 1014.7 L342.3 1014.4 L338.9 1012.6 L336.0 1009.7 L334.7 1008.9 L329.6 1006.9 L328.9 1004.6 L333.9 1000.5 L336.0 996.8 L335.8 994.4 L333.1 991.8 L332.5 987.6 L335.1 985.6 L335.9 981.8 L333.8 983.2 L330.9 983.8 L330.2 980.8 L328.1 979.7 L323.8 980.6 L320.9 982.7 L314.6 983.2 L310.9 981.8 L309.0 983.2 L305.1 981.8 L301.7 983.9 L297.2 984.4 L292.9 983.2 L289.6 983.1 L284.2 984.0 L279.3 985.4 L272.9 986.2 L265.0 990.8 L260.4 992.7 L256.8 994.0 L252.5 997.6 L250.3 997.6 L245.6 995.7 L243.2 996.8 L239.2 996.4 L234.2 996.8 L230.5 993.8 L230.3 991.2 L228.4 991.6 L228.4 990.7 Z" fill="#aad3df"/>
<path d="M433.3 957.3 L436.6 954.2 L440.4 951.6 L441.7 949.5 L444.9 948.8 L451.3 949.2 L451.7 947.3 L452.4 947.3 L451.7 949.7 L457.2 951.2 L457.2 952.0 L453.3 952.0 L450.1 953.3 L452.4 954.1 L450.7 954.6 L445.3 954.6 L443.0 953.5 L440.4 954.3 L436.9 954.6 L434.6 956.7 Z" fill="#aad3df"/>
<path d="M452.0 947.3 L455.3 947.7 L459.8 947.5 L462.3 948.4 L466.9 946.7 L469.4 945.4 L473.2 942.8 L477.2 941.3 L482.1 940.6 L488.8 940.8 L491.0 940.2 L491.3 942.8 L496.5 943.0 L498.6 946.7 L502.3 946.7 L504.7 948.1 L508.6 949.2 L511.9 949.8 L515.8 948.6 L520.5 949.2 L525.6 948.9 L531.4 945.8 L532.8 943.7 L533.2 939.3 L531.6 934.5 L528.7 931.9 L523.9 930.1 L520.5 926.7 L516.3 922.1 L510.7 919.4 L507.9 916.7 L504.9 914.9 L500.7 913.0 L502.3 911.2 L505.4 910.8 L507.8 907.1 L510.4 904.3 L508.4 899.2 L511.3 898.0 L512.6 896.3 L517.8 894.5 L517.4 893.0 L512.6 894.0 L506.5 894.7 L501.7 897.8 L495.9 898.9 L492.6 901.0 L490.1 903.4 L488.8 903.2 L490.7 907.1 L492.3 910.9 L495.9 910.1 L499.4 909.8 L499.4 913.5 L495.5 914.0 L492.5 913.7 L489.9 915.5 L486.2 918.0 L481.9 919.5 L480.1 917.6 L480.7 913.5 L479.1 912.3 L473.9 910.8 L477.2 907.1 L481.0 905.7 L481.0 903.7 L476.5 903.8 L470.7 902.9 L467.8 899.6 L472.0 899.6 L470.1 898.2 L464.9 899.0 L462.7 900.1 L460.7 904.3 L457.5 907.1 L455.6 911.2 L455.9 915.3 L451.4 916.2 L449.1 921.2 L448.7 924.8 L448.0 928.6 L444.5 930.1 L444.3 934.1 L441.6 936.3 L443.7 938.9 L444.9 940.6 L446.6 944.5 L451.4 946.9 Z" fill="#aad3df"/>
<path d="M599.6 893.5 L593.2 895.9 L586.7 898.7 L581.6 901.5 L577.1 904.3 L571.3 908.0 L567.4 914.9 L565.5 917.1 L569.3 924.8 L570.6 931.9 L573.2 936.3 L575.8 940.0 L579.0 942.8 L581.2 946.7 L584.8 952.6 L589.3 953.9 L586.1 955.2 L583.2 958.1 L582.9 962.7 L580.3 966.1 L579.6 970.6 L580.9 977.1 L586.4 978.8 L589.0 981.2 L593.8 984.4 L599.6 985.6 Z" fill="#aad3df"/>
<path d="M573.5 1044.0 L571.9 1041.0 L574.5 1039.5 L577.4 1036.9 L579.6 1034.0 L583.5 1035.5 L587.4 1035.5 L590.6 1041.0 L591.9 1044.0 Z" fill="#aad3df"/>
<path d="M472.8 1044.0 L473.0 1039.5 L474.3 1036.9 L474.7 1038.8 L475.4 1044.0 Z" fill="#aad3df"/>
<path d="M488.8 1044.0 L489.4 1040.3 L489.9 1039.9 L490.2 1044.0 Z" fill="#aad3df"/>
<path d="M227.8 865.5 L231.0 866.6 L232.0 864.7 L235.5 862.9 L237.8 862.7 L241.0 864.0 L242.3 860.2 L245.5 858.9 L248.7 861.0 L251.9 860.2 L254.5 860.0 L257.4 858.6 L259.3 858.8 L263.6 857.9 L266.1 858.7 L270.8 857.0 L273.4 854.8 L273.8 852.2 L270.9 852.3 L268.0 851.2 L269.3 850.6 L270.6 848.3 L272.7 846.6 L274.8 844.9 L275.8 840.7 L275.6 838.3 L272.9 835.9 L268.4 835.5 L266.8 837.3 L264.8 836.0 L266.8 833.5 L265.8 829.8 L263.2 827.6 L265.3 828.7 L263.5 825.4 L264.0 823.0 L261.9 821.2 L260.3 818.8 L257.1 817.1 L255.7 814.3 L254.5 809.8 L253.9 806.4 L251.6 804.5 L250.8 802.8 L248.1 801.6 L244.5 802.2 L240.7 801.6 L243.9 800.9 L247.7 798.7 L246.1 797.0 L248.1 795.1 L250.0 791.3 L251.3 788.4 L252.9 784.2 L251.6 781.8 L246.5 781.8 L242.6 781.6 L238.4 783.2 L237.4 784.2 L239.0 781.8 L240.1 779.7 L238.4 779.4 L241.0 776.9 L244.5 773.3 L245.0 770.3 L242.8 769.9 L236.1 771.4 L232.3 770.4 L231.0 774.5 L229.7 777.2 L231.3 779.4 L227.1 780.0 L226.8 783.6 L228.1 786.6 L226.8 790.2 L224.4 793.3 L228.1 795.4 L229.1 797.2 L227.8 800.7 L228.7 804.7 L227.1 809.8 L228.7 808.7 L230.0 803.6 L232.0 802.4 L233.9 802.4 L232.9 805.3 L234.7 808.0 L232.9 810.7 L231.3 813.2 L232.9 817.1 L236.1 815.5 L238.4 815.7 L241.6 814.1 L244.2 813.5 L242.6 814.9 L241.1 818.8 L242.6 821.0 L243.9 823.4 L246.1 823.0 L244.8 826.0 L245.2 828.1 L244.5 830.8 L241.9 831.6 L239.6 831.5 L236.8 830.6 L234.3 831.8 L235.8 833.5 L236.5 834.6 L233.7 837.4 L238.1 836.2 L238.4 839.4 L238.1 842.1 L234.3 844.5 L231.6 845.4 L230.3 847.0 L231.3 849.1 L234.2 849.4 L236.8 850.3 L239.0 849.9 L240.7 851.2 L244.1 851.8 L246.1 850.6 L247.7 849.4 L246.8 851.1 L245.2 852.7 L244.8 854.0 L241.9 853.8 L237.8 853.9 L237.1 855.6 L235.3 855.9 L235.2 857.8 L232.6 860.7 L231.8 862.0 L229.2 864.0 Z" fill="#f2efe9"/>
<path d="M217.0 808.9 L219.8 810.7 L218.1 812.6 L221.5 811.3 L224.9 810.6 L227.1 814.9 L227.8 817.1 L229.4 819.3 L228.7 821.6 L226.6 822.1 L225.2 824.1 L223.6 824.5 L224.4 827.4 L225.2 831.4 L225.8 835.5 L224.9 837.4 L223.6 842.3 L223.4 843.9 L219.8 844.5 L215.8 845.2 L213.9 846.5 L211.2 847.8 L209.5 849.9 L207.1 850.4 L203.9 851.2 L201.2 851.5 L202.6 849.4 L198.8 849.9 L200.7 848.0 L197.8 848.0 L197.5 846.5 L200.7 844.5 L197.0 844.7 L198.8 842.8 L201.0 842.9 L200.4 841.4 L203.9 839.6 L200.5 839.8 L202.3 838.6 L203.7 835.5 L204.8 833.5 L206.5 833.0 L206.2 832.2 L202.6 832.7 L198.6 830.8 L199.4 829.2 L200.7 828.1 L202.6 826.5 L199.4 826.5 L198.4 824.6 L200.7 823.2 L199.4 821.6 L201.2 820.7 L204.2 820.7 L205.2 821.6 L209.1 821.2 L210.0 819.1 L212.0 817.3 L207.8 817.0 L209.7 814.3 L210.4 813.2 L211.1 811.5 L213.1 810.7 L215.3 810.1 Z" fill="#f2efe9"/>
<path d="M298.0 750.5 L296.7 759.5 L298.0 762.1 L300.3 765.2 L299.9 768.9 L303.2 772.9 L307.0 775.7 L306.7 777.2 L309.9 778.4 L312.5 778.2 L316.1 776.7 L319.3 774.7 L321.2 772.7 L324.1 769.6 L325.4 767.7 L327.3 766.1 L329.3 765.8 L331.8 763.3 L331.8 759.5 L332.8 755.1 L333.1 760.2 L334.7 763.9 L336.7 764.6 L336.4 766.7 L337.0 773.3 L340.2 777.6 L341.2 781.8 L341.8 785.4 L343.4 789.0 L347.3 794.3 L345.7 796.6 L344.7 798.4 L346.3 801.3 L348.3 806.4 L347.1 808.9 L349.2 809.3 L353.4 808.5 L357.0 807.0 L356.7 803.0 L359.6 801.3 L365.0 800.1 L367.9 798.9 L370.0 794.2 L370.8 786.9 L372.1 781.2 L371.5 775.7 L373.4 770.8 L374.7 770.2 L380.2 767.1 L383.1 764.6 L386.3 762.1 L386.9 757.0 L385.7 750.5 Z" fill="#f2efe9"/>
<path d="M345.1 974.1 L346.5 972.8 L348.9 973.1 L350.7 973.2 L354.9 974.0 L360.5 973.1 L362.6 972.1 L365.4 972.1 L363.0 975.5 L361.7 978.4 L362.6 980.6 L363.1 981.9 L362.1 985.0 L360.2 984.7 L356.3 981.8 L354.3 981.6 L352.0 980.2 L348.8 978.4 L345.6 977.1 L344.6 975.9 Z" fill="#f2efe9" stroke="#f2efe9" stroke-width="0.5"/>
<path d="M317.3 949.5 L320.6 949.9 L323.7 947.1 L325.1 947.7 L326.0 949.9 L327.8 953.2 L326.7 956.0 L327.0 958.3 L326.0 964.4 L325.9 965.2 L323.1 964.4 L321.5 967.0 L320.2 967.1 L318.6 966.1 L318.5 963.6 L319.0 959.6 L319.3 958.5 L318.5 957.5 L319.1 955.2 L318.0 953.1 L317.1 952.9 L316.9 951.5 Z" fill="#f2efe9" stroke="#f2efe9" stroke-width="0.5"/>
<path d="M325.1 931.9 L325.4 934.5 L326.0 939.8 L324.4 944.1 L323.5 946.0 L321.2 943.4 L319.9 941.5 L319.9 939.5 L319.7 937.6 L320.9 935.7 L322.0 935.1 L324.4 934.7 L324.6 932.8 Z" fill="#f2efe9" stroke="#f2efe9" stroke-width="0.5"/>
<path d="M416.1 996.0 L416.6 993.6 L419.2 994.2 L422.2 995.4 L426.4 995.7 L430.3 996.8 L430.4 995.7 L432.7 996.6 L434.1 996.0 L433.7 998.0 L430.3 998.3 L424.0 998.9 L421.7 997.2 L419.2 996.8 L417.1 996.5 Z" fill="#f2efe9" stroke="#f2efe9" stroke-width="0.5"/>
<path d="M473.3 1000.3 L472.5 997.7 L476.8 997.2 L476.7 995.2 L479.1 995.6 L483.0 995.0 L487.3 992.8 L483.3 996.4 L483.3 997.6 L484.1 998.6 L481.2 999.5 L477.4 1001.1 L476.5 1001.7 L474.6 1001.1 Z" fill="#f2efe9" stroke="#f2efe9" stroke-width="0.5"/>
<path d="M279.6 961.1 L283.5 958.4 L285.1 958.1 L286.9 960.1 L285.4 963.1 L284.3 963.8 L282.2 962.3 L280.6 962.1 Z" fill="#f2efe9" stroke="#f2efe9" stroke-width="0.5"/>
<path d="M289.0 957.3 L290.9 957.0 L292.3 958.5 L291.6 959.2 L289.1 958.3 Z" fill="#f2efe9" stroke="#f2efe9" stroke-width="0.5"/>
<path d="M272.4 966.2 L273.5 965.2 L274.9 965.6 L274.2 967.0 L272.9 967.3 Z" fill="#f2efe9" stroke="#f2efe9" stroke-width="0.5"/>
<path d="M412.4 967.3 L415.0 965.9 L419.8 969.0 L422.9 973.1 L422.7 974.7 L419.8 972.7 L417.2 971.2 L415.6 969.8 Z" fill="#f2efe9" stroke="#f2efe9" stroke-width="0.5"/>
<path d="M443.0 991.2 L443.3 989.2 L446.2 986.8 L446.6 987.6 L445.3 990.0 Z" fill="#f2efe9" stroke="#f2efe9" stroke-width="0.5"/>
<path d="M431.1 964.0 L433.3 962.9 L435.0 963.1 L435.9 965.6 L432.7 966.3 L431.4 965.2 Z" fill="#f2efe9" stroke="#f2efe9" stroke-width="0.5"/>
<path d="M431.1 969.8 L433.0 969.5 L433.0 972.2 L431.4 972.7 Z" fill="#f2efe9" stroke="#f2efe9" stroke-width="0.5"/>
<path d="M435.6 976.1 L438.8 976.1 L438.5 977.1 L435.9 977.1 Z" fill="#f2efe9" stroke="#f2efe9" stroke-width="0.5"/>
<path d="M437.9 983.4 L440.8 983.2 L440.4 984.0 L438.2 984.7 Z" fill="#f2efe9" stroke="#f2efe9" stroke-width="0.5"/>
<path d="M427.9 980.8 L429.5 980.8 L429.5 983.1 L428.2 982.8 Z" fill="#f2efe9" stroke="#f2efe9" stroke-width="0.5"/>
<path d="M423.7 974.5 L425.3 975.5 L425.6 976.7 L424.0 975.5 Z" fill="#f2efe9" stroke="#f2efe9" stroke-width="0.5"/>
<path d="M425.9 957.9 L428.5 957.9 L428.2 959.4 L426.3 959.4 Z" fill="#f2efe9" stroke="#f2efe9" stroke-width="0.5"/>
<path d="M422.4 951.1 L424.2 951.4 L424.0 952.8 L422.7 952.6 Z" fill="#f2efe9" stroke="#f2efe9" stroke-width="0.5"/>
<path d="M395.6 972.7 L396.9 970.4 L398.5 973.1 L397.3 973.9 Z" fill="#f2efe9" stroke="#f2efe9" stroke-width="0.5"/>
<path d="M391.1 959.8 L393.1 959.2 L394.0 962.3 L392.7 962.6 Z" fill="#f2efe9" stroke="#f2efe9" stroke-width="0.5"/>
<path d="M397.4 975.1 L399.7 976.3 L398.9 977.1 L397.6 976.3 Z" fill="#f2efe9" stroke="#f2efe9" stroke-width="0.5"/>
<path d="M396.9 967.3 L398.2 967.5 L397.9 969.5 L396.9 969.4 Z" fill="#f2efe9" stroke="#f2efe9" stroke-width="0.5"/>
<path d="M356.7 990.6 L358.3 991.2 L357.9 992.0 L356.8 991.4 Z" fill="#f2efe9" stroke="#f2efe9" stroke-width="0.5"/>
<path d="M329.6 933.6 L331.7 933.2 L331.5 934.3 L329.9 934.3 Z" fill="#f2efe9" stroke="#f2efe9" stroke-width="0.5"/>
<path d="M336.0 805.3 L338.6 802.4 L343.8 800.4 L345.7 801.5 L345.4 806.4 L343.1 808.7 L344.7 810.4 L342.5 813.4 L340.2 812.6 L337.0 811.0 L336.0 809.3 L336.7 807.0 Z" fill="#f2efe9" stroke="#f2efe9" stroke-width="0.5"/>
<path d="M327.0 807.6 L330.9 806.2 L334.1 809.3 L333.8 812.6 L330.2 812.6 L328.3 810.4 Z" fill="#f2efe9" stroke="#f2efe9" stroke-width="0.5"/>
<path d="M335.1 814.9 L340.5 813.8 L342.8 814.9 L341.5 817.9 L338.3 817.5 L335.4 816.0 Z" fill="#f2efe9" stroke="#f2efe9" stroke-width="0.5"/>
<path d="M359.2 810.1 L361.8 809.8 L362.1 812.6 L360.5 813.4 L359.1 812.1 Z" fill="#f2efe9" stroke="#f2efe9" stroke-width="0.5"/>
<path d="M370.2 799.5 L371.2 793.7 L373.7 785.8 L374.7 786.6 L373.1 792.5 L371.2 799.3 Z" fill="#f2efe9" stroke="#f2efe9" stroke-width="0.5"/>
<path d="M381.1 789.6 L381.5 783.6 L385.0 779.0 L387.9 778.8 L385.7 785.4 L383.1 791.1 Z" fill="#f2efe9" stroke="#f2efe9" stroke-width="0.5"/>
<path d="M405.3 774.5 L406.9 771.8 L412.1 770.6 L414.7 772.7 L411.1 775.5 L407.6 778.2 L406.3 776.9 Z" fill="#f2efe9" stroke="#f2efe9" stroke-width="0.5"/>
<path d="M406.6 767.1 L410.1 764.6 L413.0 767.3 L410.1 769.6 Z" fill="#f2efe9" stroke="#f2efe9" stroke-width="0.5"/>
<path d="M254.5 859.5 L256.1 858.4 L257.6 859.3 L256.1 860.5 Z" fill="#f2efe9" stroke="#f2efe9" stroke-width="0.5"/>
<path d="M233.7 823.8 L234.9 819.9 L236.5 819.9 L236.1 822.7 Z" fill="#f2efe9" stroke="#f2efe9" stroke-width="0.5"/>
<path d="M218.7 781.2 L219.7 775.7 L224.2 772.0 L224.9 774.5 L223.3 778.2 L221.3 781.2 Z" fill="#f2efe9" stroke="#f2efe9" stroke-width="0.5"/>
<path d="M216.5 789.0 L216.2 783.0 L218.4 782.4 L218.1 789.0 Z" fill="#f2efe9" stroke="#f2efe9" stroke-width="0.5"/>
<path d="M221.0 784.8 L223.6 781.8 L225.2 784.2 L228.1 787.2 L225.8 789.6 L222.9 786.6 Z" fill="#f2efe9" stroke="#f2efe9" stroke-width="0.5"/>
<path d="M223.6 798.1 L224.5 794.9 L227.8 796.0 L227.4 798.1 Z" fill="#f2efe9" stroke="#f2efe9" stroke-width="0.5"/>
<path d="M222.6 805.3 L223.9 802.8 L225.8 804.1 L225.2 806.4 Z" fill="#f2efe9" stroke="#f2efe9" stroke-width="0.5"/>
<path d="M225.2 803.6 L227.8 800.1 L227.4 803.2 Z" fill="#f2efe9" stroke="#f2efe9" stroke-width="0.5"/>
<path d="M229.8 807.0 L231.0 805.3 L231.8 807.0 L231.0 808.5 Z" fill="#f2efe9" stroke="#f2efe9" stroke-width="0.5"/>
<path d="M242.9 766.5 L244.5 763.9 L246.8 765.2 L247.1 767.1 L244.5 768.3 Z" fill="#f2efe9" stroke="#f2efe9" stroke-width="0.5"/>
<path d="M245.2 762.1 L248.4 761.4 L248.7 763.3 L245.8 763.3 Z" fill="#f2efe9" stroke="#f2efe9" stroke-width="0.5"/>
<path d="M254.2 755.1 L256.1 749.2 L258.1 749.2 L256.8 755.1 Z" fill="#f2efe9" stroke="#f2efe9" stroke-width="0.5"/>
<path d="M153.3 1015.4 L156.6 1015.0 L156.9 1016.2 L154.3 1016.6 Z" fill="#f2efe9" stroke="#f2efe9" stroke-width="0.5"/>
<path d="M97.9 975.5 L102.1 975.5 L102.4 976.6 L98.9 976.6 Z" fill="#f2efe9" stroke="#f2efe9" stroke-width="0.5"/>
<path d="M88.2 967.9 L90.2 967.9 L90.2 969.0 L88.2 969.0 Z" fill="#f2efe9" stroke="#f2efe9" stroke-width="0.5"/>
<path d="M80.8 970.0 L83.7 970.6 L83.4 971.2 L80.8 970.8 Z" fill="#f2efe9" stroke="#f2efe9" stroke-width="0.5"/>
<path d="M333.8 1007.1 L335.7 1007.6 L335.1 1008.6 L333.8 1008.3 Z" fill="#f2efe9" stroke="#f2efe9" stroke-width="0.5"/>
<path d="M508.7 771.4 L512.0 768.3 L515.2 773.9 L512.0 776.3 Z" fill="#aad3df" opacity="0.6"/>
<path d="M464.6 774.5 L467.2 773.0 L467.8 776.0 L465.6 776.7 Z" fill="#aad3df" opacity="0.6"/>
<path d="M577.1 829.8 L580.6 813.2 L583.2 810.1 L583.8 811.0 L581.6 818.8 L578.0 830.1 Z" fill="#aad3df" opacity="0.6"/>
<path d="M552.2 877.6 L556.8 866.2 L560.3 857.1 L560.8 857.5 L557.4 866.7 L553.1 877.9 Z" fill="#aad3df" opacity="0.6"/>
<path d="M535.8 889.2 L541.6 882.5 L542.6 883.5 L536.8 890.0 Z" fill="#aad3df" opacity="0.6"/>
<path d="M480.1 896.8 L485.5 890.8 L490.7 890.2 L486.2 891.8 L481.0 897.3 Z" fill="#aad3df" opacity="0.6"/>
<path d="M472.0 871.7 L478.5 874.2 L478.8 875.4 L472.7 873.0 Z" fill="#aad3df" opacity="0.6"/>
<path d="M344.4 772.0 L347.6 764.6 L351.5 761.4 L355.0 765.2 L352.1 769.6 L348.3 773.3 Z" fill="#aad3df"/>
<path d="M355.4 780.6 L357.3 773.3 L360.5 769.6 L359.9 775.7 L357.0 780.8 Z" fill="#aad3df"/>
<path d="M367.6 760.2 L374.1 758.3 L379.9 760.8 L374.1 762.1 Z" fill="#aad3df"/>
<path d="M438.5 767.1 L443.0 765.8 L444.3 773.3 L446.2 779.4 L443.7 780.0 L440.8 774.5 Z" fill="#aad3df"/>
<path d="M537.1 969.4 L541.0 966.5 L545.5 966.5 L543.5 970.6 L539.7 971.8 Z" fill="#aad3df"/>
<path d="M554.5 972.7 L556.4 971.8 L560.0 978.4 L558.4 981.6 L555.8 979.2 Z" fill="#aad3df"/>
<path d="M554.2 952.6 L556.8 953.9 L558.4 956.0 L555.8 956.0 Z" fill="#aad3df"/>
<path d="M297.4 837.8 L299.0 834.6 L300.6 836.7 L301.6 839.4 L298.7 842.1 L297.0 841.0 Z" fill="#aad3df"/>
<path d="M375.7 897.8 L381.1 894.9 L381.5 895.6 L376.0 898.4 Z" fill="#aad3df"/>
<path d="M304.1 902.9 L306.7 900.1 L309.0 900.6 L306.4 901.5 Z" fill="#aad3df"/>
<path d="M322.5 888.3 L326.4 890.2 L327.0 890.7 L323.1 889.2 Z" fill="#aad3df"/>
<path d="M332.5 909.4 L334.4 906.2 L333.8 909.8 Z" fill="#aad3df"/>
<path d="M486.8 903.8 L490.1 905.7 L491.0 908.9 L488.8 908.5 L486.2 905.2 Z" fill="#aad3df"/>
<path d="M492.6 1023.4 L493.6 1023.4 L493.3 1028.7 L492.6 1028.3 Z" fill="#aad3df"/>
</g>
<path d="M207.3 941.9 L211.7 939.8 L222.0 941.1 L224.5 944.1 L220.0 949.2 L220.4 955.2 L219.4 960.2 L216.2 960.6 L219.4 966.1 L217.5 971.0 L219.4 972.7 L216.2 978.0 L216.8 981.0 M253.2 928.5 L255.5 931.4 L260.0 933.2 L269.0 933.6 L273.8 935.4 L275.8 936.7 L284.8 936.9 M280.9 855.1 L282.5 858.6 L285.1 858.6 L291.6 866.2 L295.8 864.7 L295.8 868.2 L301.9 870.7 L305.4 871.5 L308.0 874.4 L312.2 874.4 L317.3 876.4 L313.5 885.9 L313.3 889.9 M313.3 889.9 L309.6 891.1 L303.8 899.6 L303.8 903.4 L308.3 901.0 L309.9 905.7 L308.3 906.6 L310.3 910.3 L307.4 913.0 L309.6 916.7 L309.0 919.9 L314.1 921.7 L312.8 924.8 M286.4 852.3 L291.9 852.2 L296.7 851.5 L302.2 854.5 L301.2 858.3 L303.2 858.6 L304.5 860.2 L305.4 863.2 L303.8 865.0 L306.4 868.2 L305.4 871.5 M303.2 858.6 L303.8 854.5 L302.8 847.8 L308.0 846.8 L307.7 843.1 L309.9 843.1 L309.9 838.9 L310.9 832.5 M320.2 814.3 L325.4 815.1 M356.1 825.2 L357.3 831.9 L355.7 836.7 L358.9 839.9 L359.6 849.4 L361.2 856.1 L359.9 857.6 M359.9 857.6 L356.7 856.1 L351.5 859.1 L344.1 863.7 L342.5 863.2 L345.1 867.2 L353.4 878.4 L348.3 883.0 L348.3 890.7 L343.1 889.2 L332.2 890.7 L326.4 890.4 L319.9 888.3 L313.3 889.9 M309.9 905.7 L315.4 905.5 L319.0 900.6 L322.5 906.2 L324.4 900.6 L329.6 902.4 L331.8 896.8 L326.4 894.5 L326.4 890.4 M331.8 896.8 L342.5 894.9 L344.4 898.2 L352.8 899.9 L350.9 902.9 L352.1 906.2 L354.1 908.5 M359.9 857.6 L369.5 859.7 L373.4 862.2 L378.6 863.2 L386.0 871.2 L392.1 874.2 L397.3 872.2 L409.8 875.4 M353.4 878.4 L359.2 880.1 L361.2 876.1 L373.4 879.9 L375.3 885.9 L368.3 896.8 L358.3 901.0 L352.8 899.9 M373.4 879.9 L379.9 876.6 L386.0 871.2 M375.3 885.9 L379.9 888.3 L386.0 887.8 L392.7 884.4 L396.6 881.0 L404.3 882.5 L407.2 882.0 L409.8 875.4 M390.8 819.3 L411.4 820.5 L415.9 824.9 L418.5 838.3 L414.0 843.1 L416.6 850.9 L419.8 857.6 L410.5 870.7 L409.8 875.4 M400.2 801.0 L406.9 797.2 L425.0 797.2 L435.9 805.5 L435.9 811.7 L430.8 814.3 L428.8 821.0 L415.9 824.9 M411.4 820.5 L410.8 813.8 L401.8 810.4 M421.4 779.7 L427.5 778.2 L435.3 784.0 L440.8 783.8 L444.0 786.6 L446.2 800.1 L435.9 805.5 M440.8 783.8 L441.7 774.5 L445.3 759.8 M446.2 800.1 L463.6 806.4 L463.0 815.5 L475.2 830.3 L466.9 833.0 L469.4 844.7 L461.7 853.0 L439.8 849.9 L427.5 846.3 L416.6 850.9 M469.4 844.7 L482.3 842.1 L493.9 862.2 L509.4 867.2 L522.9 870.2 L521.0 887.3 L511.0 894.5 M407.2 882.0 L412.1 886.3 L425.0 888.7 L435.9 883.5 L443.3 881.5 L452.4 891.1 L458.5 901.0 L446.2 909.8 L455.6 911.2 M435.9 883.5 L439.8 888.3 L445.6 896.3 L446.2 909.8 M412.1 886.3 L400.8 902.0 L395.0 903.7 L402.4 912.1 L402.4 916.2 L409.2 918.5 L410.8 921.2 M410.8 921.2 L412.7 924.8 L427.5 926.1 L438.5 921.8 L448.7 925.2 M368.3 896.8 L371.2 900.3 L378.2 906.2 L385.7 905.7 L395.0 903.7 M385.7 905.7 L386.9 915.3 L389.2 915.3 L387.6 920.3 L390.8 923.4 L388.2 927.5 L383.4 935.8 M366.0 911.7 L369.9 914.0 L379.5 913.5 L386.9 915.3 M366.0 911.7 L366.3 916.7 L368.9 921.2 L377.9 931.9 M410.8 921.2 L408.9 931.9 L408.5 938.0 L412.4 946.2 L422.4 944.5 L432.7 946.2 L434.3 943.2 L444.9 940.6 M432.7 946.2 L435.9 946.2 L432.4 951.4 M408.5 938.0 L403.1 938.0 L397.3 941.5 L396.6 946.7 L399.5 950.5 L393.4 960.2 M399.5 950.5 L412.4 946.2 M389.5 941.9 L390.8 935.8 L394.0 935.0 L397.3 941.5 M394.0 935.0 L395.6 933.2 L388.6 928.3 M496.0 989.8 L500.7 988.4 L501.0 984.0 L509.4 984.0 L522.3 984.0 L537.4 981.6 L553.2 981.2 L548.1 962.7 L553.2 960.2 L545.5 949.7 L544.5 948.4 L532.3 944.8 M522.0 928.3 L541.6 932.8 L551.3 934.5 L563.8 941.5 L572.5 947.5 L577.7 941.9 M544.5 948.4 L554.5 946.7 L563.8 941.5 M554.5 946.7 L558.4 950.9 L564.2 961.9 L564.2 966.9 L573.8 960.2 L579.6 970.6 M553.2 960.2 L564.2 966.9 M537.4 981.6 L530.0 987.2 L528.7 1003.1 L514.5 1011.2 L501.7 1019.3 L494.6 1016.2 L493.9 1012.0 L499.1 1006.2 L500.4 1003.8 L496.3 1001.3 M514.5 1011.2 L517.1 1020.4 L524.9 1022.3 L535.8 1028.3 L552.6 1042.5 L564.2 1043.2 L571.9 1036.2 L573.8 1036.6 L577.4 1036.9 M553.2 981.2 L557.1 990.4 L561.6 997.6 L557.1 1006.2 L561.6 1013.1 L571.9 1020.8 L571.9 1029.1 L573.8 1032.8 L577.4 1036.9 M517.1 1020.4 L502.9 1025.3 L509.4 1032.8 L506.2 1036.6 L501.3 1037.7 L497.1 1042.5 M493.9 1012.0 L493.6 1018.5 L493.3 1025.3 L490.1 1039.9 M485.2 1027.2 L489.4 1040.3 M250.3 997.6 L252.9 1003.1 L253.5 1011.6 L256.8 1019.3 L245.8 1020.8 L241.3 1024.6 L241.0 1029.8 L232.3 1036.6 L222.6 1039.5 L208.4 1046.2 M319.9 982.8 L318.0 996.0 L312.8 1005.4 L312.8 1011.6 L322.8 1020.8 L325.7 1034.3 L328.3 1044.0 M338.9 1012.6 L338.6 1018.5 L330.9 1023.4 L330.2 1031.3 L325.7 1034.3 M426.6 1024.6 L424.6 1030.6 L425.6 1042.1 L425.6 1044.0 M336.7 764.6 L340.5 762.1 L340.5 754.4 L344.4 750.5 M217.8 812.6 L215.8 816.0 L212.0 819.3 L217.5 822.7 L221.6 823.8 L224.2 823.2 M580.3 902.9 L577.1 898.7 L567.4 886.8 L565.5 880.1 L568.0 874.2 L566.4 867.2 L577.1 866.2 L579.0 860.2 L591.9 848.9 L599.6 849.9 M579.6 970.6 L573.8 967.7 L572.5 960.6" fill="none" stroke="#b892c2" stroke-width="0.85" stroke-linejoin="round" opacity="0.6" filter="url(#blurB)"/>
<rect x="31" y="949" width="563" height="0.8" fill="#fff" opacity="0.45"/><rect x="264.1" y="759" width="0.8" height="282" fill="#fff" opacity="0.45"/><rect x="554.5" y="759" width="0.8" height="282" fill="#fff" opacity="0.35"/>
<text x="238" y="813" font-size="9.8" text-anchor="middle" textLength="95" lengthAdjust="spacingAndGlyphs" fill="#7f5a8c" stroke="#f6f2f4" stroke-width="1.8" stroke-opacity="0.7" paint-order="stroke" filter="url(#blurT)">United Kingdom</text>
<text x="275.5" y="900.5" font-size="9.8" text-anchor="middle" textLength="38" lengthAdjust="spacingAndGlyphs" fill="#7f5a8c" stroke="#f6f2f4" stroke-width="1.8" stroke-opacity="0.7" paint-order="stroke" filter="url(#blurT)">France</text>
<text x="242.5" y="963.6" font-size="9.8" text-anchor="middle" textLength="40" lengthAdjust="spacingAndGlyphs" fill="#7f5a8c" stroke="#f6f2f4" stroke-width="1.8" stroke-opacity="0.7" paint-order="stroke" filter="url(#blurT)">España</text>
<text x="446" y="832" font-size="9.8" text-anchor="middle" textLength="56" lengthAdjust="spacingAndGlyphs" fill="#7f5a8c" stroke="#f6f2f4" stroke-width="1.8" stroke-opacity="0.7" paint-order="stroke" filter="url(#blurT)">Беларусь</text>
<text x="483" y="887" font-size="9.8" text-anchor="middle" textLength="46" lengthAdjust="spacingAndGlyphs" fill="#7f5a8c" stroke="#f6f2f4" stroke-width="1.8" stroke-opacity="0.7" paint-order="stroke" filter="url(#blurT)">Україна</text>
<text x="421" y="909" font-size="9.8" text-anchor="middle" textLength="49" lengthAdjust="spacingAndGlyphs" fill="#7f5a8c" stroke="#f6f2f4" stroke-width="1.8" stroke-opacity="0.7" paint-order="stroke" filter="url(#blurT)">România</text>
<text x="405.5" y="972" font-size="9.8" text-anchor="middle" textLength="32" lengthAdjust="spacingAndGlyphs" fill="#7f5a8c" stroke="#f6f2f4" stroke-width="1.8" stroke-opacity="0.7" paint-order="stroke" filter="url(#blurT)">Ελλάς</text>
<text x="493" y="970.5" font-size="9.8" text-anchor="middle" textLength="42" lengthAdjust="spacingAndGlyphs" fill="#7f5a8c" stroke="#f6f2f4" stroke-width="1.8" stroke-opacity="0.7" paint-order="stroke" filter="url(#blurT)">Türkiye</text>
<text x="537.5" y="1018" font-size="9.8" text-anchor="middle" textLength="30" lengthAdjust="spacingAndGlyphs" fill="#7f5a8c" stroke="#f6f2f4" stroke-width="1.8" stroke-opacity="0.7" paint-order="stroke" filter="url(#blurT)">العراق</text>
<text x="268" y="1042.4" font-size="9.8" text-anchor="middle" textLength="42" lengthAdjust="spacingAndGlyphs" fill="#7f5a8c" stroke="#f6f2f4" stroke-width="1.8" stroke-opacity="0.7" paint-order="stroke" filter="url(#blurT)">Algérie</text>
</g>
<circle cx="326.8" cy="863.6" r="39.6" fill="#368c6b"/>
<circle cx="266.4" cy="934.4" r="15.3" fill="#368c6b"/>
<circle cx="350.5" cy="943.6" r="10.6" fill="#368c6b"/>
<text x="296" y="870" font-size="17" textLength="62.5" lengthAdjust="spacingAndGlyphs" fill="#fff">€ 3.23M</text>
<text x="228.9" y="940.8" font-size="17" textLength="75.9" lengthAdjust="spacingAndGlyphs" fill="#fff">€ 742.51K</text>
<text x="312.9" y="950.2" font-size="17" textLength="76.0" lengthAdjust="spacingAndGlyphs" fill="#fff">€ 248.74K</text>
<rect x="43" y="771.7" width="34.8" height="69.3" rx="4" fill="#fff" stroke="#b9b9b9" stroke-width="1"/>
<rect x="43.5" y="806" width="33.8" height="1" fill="#ccc"/>
<path d="M53.2 788.6 H67.8 M60.5 781.3 V795.9 M53.8 824.7 H67.2" stroke="#111" stroke-width="2.6" fill="none"/>
<text x="61.5" y="864.4" font-size="18.5" font-weight="bold" text-anchor="middle" fill="#111">3</text>
<rect x="36.9" y="913.2" width="49.6" height="49.2" rx="4.5" fill="#e8f1f4" fill-opacity="0.55" stroke="#9a9a9a" stroke-width="1.2"/>
<path d="M61.5 926.2 C54.5 926.2 50.6 930 50.6 933.6 C50.6 937.4 54.6 940.2 59.8 940.4 C62.8 940.5 64.2 942.2 63.2 944.3 C62.5 945.8 61 947 59.2 947.6 M59.8 940.4 C57.6 939.6 57.2 937 59.4 936.6 C61.6 936.3 62.6 938.6 61.2 940.2 M61.2 940.3 C68.2 940 72.6 936.8 72.4 933 C72.2 929.2 67.8 926.2 61.5 926.2" fill="none" stroke="#333" stroke-width="1.5" stroke-linecap="round"/>
<rect x="37.5" y="977.8" width="83.9" height="18.6" fill="#fff" fill-opacity="0.75"/><path d="M38.3 977.8 V996.2 H120.6 V977.8" fill="none" stroke="#777" stroke-width="1.6"/>
<rect x="37.5" y="997" width="67.2" height="18.3" fill="#fff" fill-opacity="0.75"/><path d="M38.3 1015.3 V997 H103.9 V1015.3" fill="none" stroke="#777" stroke-width="1.6"/>
<text x="44" y="991.6" font-size="13" textLength="52.5" lengthAdjust="spacingAndGlyphs" fill="#222">1000 km</text>
<text x="43.6" y="1010.6" font-size="13" textLength="41" lengthAdjust="spacingAndGlyphs" fill="#222">500 mi</text>
<rect x="31" y="1020.8" width="200.7" height="20" fill="#fff" fill-opacity="0.8"/>
<text x="36.7" y="1034.2" font-size="13" textLength="189.5" lengthAdjust="spacingAndGlyphs" fill="#333">© <tspan fill="#0078a8">OpenStreetMap</tspan> contributors</text>
<circle cx="568" cy="787" r="11.8" fill="none" stroke="#7a7a7a" stroke-width="1.6"/><text x="568" y="793.2" font-size="17.5" text-anchor="middle" fill="#7a7a7a">?</text>
</g>
<g id="p5">
<rect x="948.4" y="813.3" width="1" height="203" fill="#ececec"/>
<rect x="1129.8" y="813.3" width="1" height="203" fill="#ececec"/>
<rect x="767.1999999999999" y="813.3" width="1.2" height="203" fill="#c4c4c4"/>
<rect x="948.4" y="1010.5" width="1" height="5.8" fill="#c4c4c4"/>
<rect x="1129.8" y="1010.5" width="1" height="5.8" fill="#c4c4c4"/>
<rect x="767.0" y="822.8" width="365.3" height="47.4" fill="#368c6b"/>
<rect x="767.0" y="889.3" width="276.7" height="47.3" fill="#368c6b"/>
<rect x="767.0" y="955.6" width="123.9" height="47.1" fill="#368c6b"/>
<rect x="948.4" y="822" width="1" height="181" fill="#fff" opacity="0.18"/>
<rect x="1129.8" y="822" width="1" height="181" fill="#fff" opacity="0.18"/>
<text x="713.6" y="852.8" font-size="17.5" textLength="49.0" lengthAdjust="spacingAndGlyphs" fill="#1f1f1f">Urban</text>
<text x="684.9" y="919.2" font-size="17.5" textLength="77.7" lengthAdjust="spacingAndGlyphs" fill="#1f1f1f">Suburban</text>
<text x="721.2" y="985.5" font-size="17.5" textLength="41.4" lengthAdjust="spacingAndGlyphs" fill="#1f1f1f">Rural</text>
<text x="768.0" y="1034.6" font-size="16" text-anchor="middle" textLength="47.5" lengthAdjust="spacingAndGlyphs" fill="#1f1f1f">€ 0.00</text>
<text x="948.8" y="1034.6" font-size="16" text-anchor="middle" textLength="63.0" lengthAdjust="spacingAndGlyphs" fill="#1f1f1f">€ 1.00M</text>
<text x="1129.3" y="1034.6" font-size="16" text-anchor="middle" textLength="63.0" lengthAdjust="spacingAndGlyphs" fill="#1f1f1f">€ 2.00M</text>
<g transform="translate(691.3,774.8)" fill="#767676"><path d="M0 8.6 L8.9 -0.2 L8.9 4.9 C15.5 5 20.6 8.6 20.9 14 C21 17 19.8 19.6 17.8 21.6 C18.2 16.4 15.2 12.2 8.9 11.9 L8.9 17.2 Z"/></g>
<text x="721.8" y="794.2" font-size="18" textLength="44.5" lengthAdjust="spacingAndGlyphs" fill="#9a9a9a">Back</text>
<g transform="translate(787.5,773.6)" fill="none" stroke="#c9c9c9"><circle cx="9.3" cy="8.8" r="7.9" stroke-width="1.9"/><path d="M5.3 8.6 L13.2 8.6" stroke-width="2.6"/><path d="M15.2 14.8 L21 20.6" stroke-width="3.6" stroke-linecap="round" stroke="#c9c9c9"/></g>
<text x="818.8" y="794.2" font-size="18" textLength="85.7" lengthAdjust="spacingAndGlyphs" fill="#cdcdcd">Zoom-out</text>
<g transform="translate(1127.2,775)" fill="#7a7a7a"><rect x="0" y="0.3" width="2.6" height="2.6"/><rect x="4.6" y="0.9" width="15.6" height="1.5"/><rect x="0" y="6.5" width="2.6" height="2.6"/><rect x="4.6" y="7.1" width="15.6" height="1.5"/><rect x="0" y="12.7" width="2.6" height="2.6"/><rect x="4.6" y="13.3" width="15.6" height="1.5"/><rect x="0" y="18.9" width="2.6" height="2.6"/><rect x="4.6" y="19.5" width="15.6" height="1.5"/></g>
<text x="1156.0" y="794.2" font-size="18" textLength="26.5" lengthAdjust="spacingAndGlyphs" fill="#a0a0a0">Lin</text>
<circle cx="1216.3" cy="786.6" r="11.8" fill="none" stroke="#7a7a7a" stroke-width="1.6"/>
<text x="1216.3" y="792.8" font-size="17.5" text-anchor="middle" fill="#7a7a7a">?</text>
</g>
<g id="p6">
<rect x="1664.8" y="813.3" width="1" height="203" fill="#ececec"/>
<rect x="1449.4" y="813.3" width="1.2" height="203" fill="#c4c4c4"/>
<rect x="1664.8" y="1010.5" width="1" height="5.8" fill="#c4c4c4"/>
<rect x="1449.2" y="822.8" width="339.9" height="47.4" fill="#368c6b"/>
<rect x="1449.2" y="889.3" width="303.4" height="47.3" fill="#368c6b"/>
<rect x="1449.2" y="955.6" width="274.1" height="47.1" fill="#368c6b"/>
<rect x="1664.8" y="822" width="1" height="181" fill="#fff" opacity="0.18"/>
<text x="1372.2" y="852.8" font-size="17.5" textLength="72.6" lengthAdjust="spacingAndGlyphs" fill="#1f1f1f">Germany</text>
<text x="1391.6" y="919.2" font-size="17.5" textLength="53.2" lengthAdjust="spacingAndGlyphs" fill="#1f1f1f">France</text>
<text x="1410.6" y="985.5" font-size="17.5" textLength="34.2" lengthAdjust="spacingAndGlyphs" fill="#1f1f1f">Italy</text>
<text x="1450.0" y="1034.6" font-size="16" text-anchor="middle" textLength="47.5" lengthAdjust="spacingAndGlyphs" fill="#1f1f1f">€ 0.00</text>
<text x="1665.3" y="1034.6" font-size="16" text-anchor="middle" textLength="77.0" lengthAdjust="spacingAndGlyphs" fill="#1f1f1f">€ 500.00K</text>
<g transform="translate(1353,774.8)" fill="#767676"><path d="M0 8.6 L8.9 -0.2 L8.9 4.9 C15.5 5 20.6 8.6 20.9 14 C21 17 19.8 19.6 17.8 21.6 C18.2 16.4 15.2 12.2 8.9 11.9 L8.9 17.2 Z"/></g>
<text x="1383.8" y="794.2" font-size="18" textLength="44.5" lengthAdjust="spacingAndGlyphs" fill="#9a9a9a">Back</text>
<g transform="translate(1449.2,773.6)" fill="none" stroke="#c9c9c9"><circle cx="9.3" cy="8.8" r="7.9" stroke-width="1.9"/><path d="M5.3 8.6 L13.2 8.6" stroke-width="2.6"/><path d="M15.2 14.8 L21 20.6" stroke-width="3.6" stroke-linecap="round" stroke="#c9c9c9"/></g>
<text x="1480.8" y="794.2" font-size="18" textLength="85.3" lengthAdjust="spacingAndGlyphs" fill="#cdcdcd">Zoom-out</text>
<g transform="translate(1776,775)" fill="#7a7a7a"><rect x="0" y="0.3" width="2.6" height="2.6"/><rect x="4.6" y="0.9" width="15.6" height="1.5"/><rect x="0" y="6.5" width="2.6" height="2.6"/><rect x="4.6" y="7.1" width="15.6" height="1.5"/><rect x="0" y="12.7" width="2.6" height="2.6"/><rect x="4.6" y="13.3" width="15.6" height="1.5"/><rect x="0" y="18.9" width="2.6" height="2.6"/><rect x="4.6" y="19.5" width="15.6" height="1.5"/></g>
<text x="1804.8" y="794.2" font-size="18" textLength="27.4" lengthAdjust="spacingAndGlyphs" fill="#a0a0a0">Lin</text>
<circle cx="1865.5" cy="786.6" r="11.8" fill="none" stroke="#7a7a7a" stroke-width="1.6"/>
<text x="1865.5" y="792.8" font-size="17.5" text-anchor="middle" fill="#7a7a7a">?</text>
</g>
<rect x="1654" y="980.4" width="32.4" height="22.3" fill="#fff" opacity="0.5"/>
<path d="M1662.1 994.8 L1670.2 1000.8 L1678.4 994.8" fill="none" stroke="#55796b" stroke-width="1.2"/>
</svg></body></html>
